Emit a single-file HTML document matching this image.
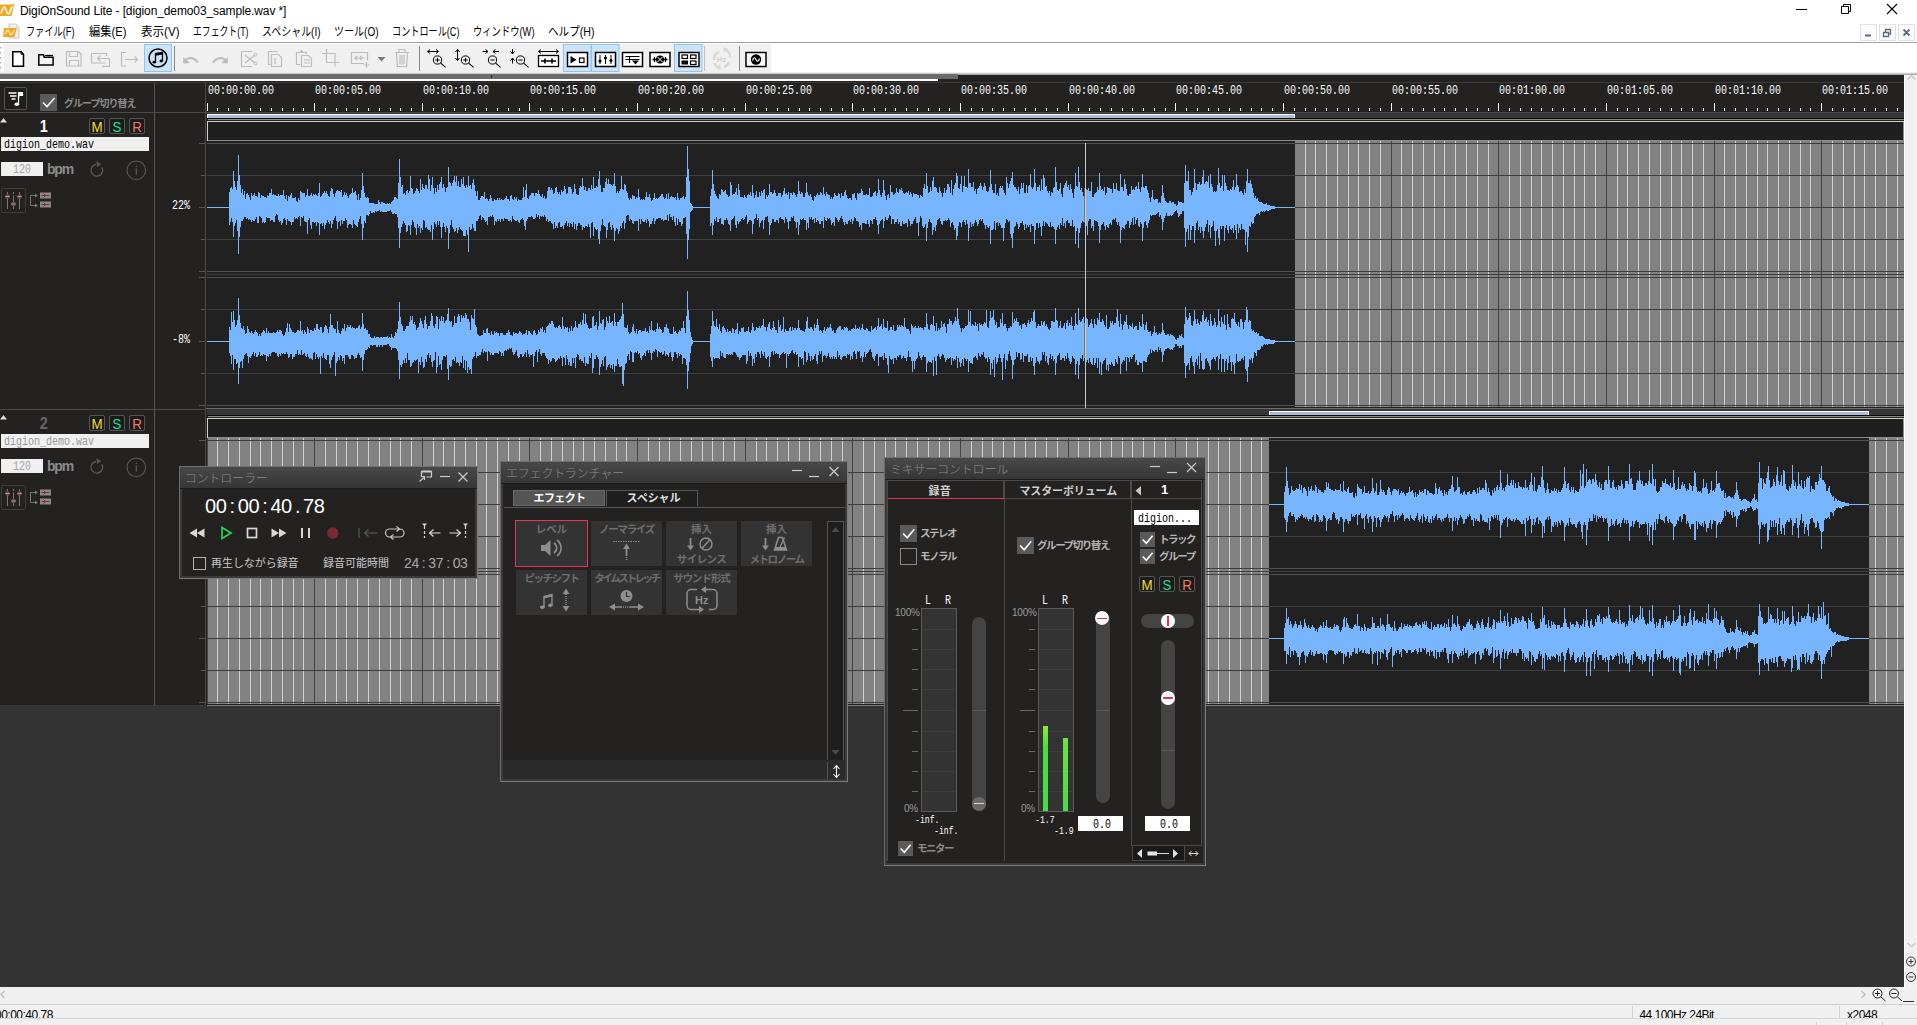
<!DOCTYPE html><html lang="ja"><head><meta charset="utf-8"><title>DigiOnSound Lite</title><style>
html,body{margin:0;padding:0;}
body{width:1917px;height:1025px;overflow:hidden;background:#333;position:relative;font-family:"Liberation Sans","Noto Sans CJK JP",sans-serif;font-size:12px;}
div,span,svg{position:absolute;box-sizing:border-box;}
.t{white-space:nowrap;line-height:1;}
.mono{font-family:"Liberation Mono","IPAGothic",monospace;}
.jp{font-family:"Liberation Sans","Noto Sans CJK JP",sans-serif;}
i{font-style:normal;margin:0 3px;}</style></head><body><div style="left:0px;top:81px;width:1904px;height:625px;background:#232221;"></div><div style="left:0px;top:706px;width:1904px;height:281px;background:#333;"></div><div style="left:0px;top:82px;width:1904px;height:1px;background:#3a3a3a;"></div><div style="left:0px;top:112px;width:1904px;height:1px;background:#4a4a4a;"></div><div style="left:154px;top:83px;width:1px;height:623px;background:#555;"></div><div style="left:205px;top:83px;width:1px;height:623px;background:#4a4a4a;"></div><svg style="left:0px;top:0px;" width="1903" height="112" viewBox="0 0 1903 112"><rect x="207" y="103" width="1" height="8" fill="#fff"/><rect x="217" y="108" width="1" height="3" fill="#f0f0f0"/><rect x="228" y="108" width="1" height="3" fill="#f0f0f0"/><rect x="239" y="108" width="1" height="3" fill="#f0f0f0"/><rect x="250" y="108" width="1" height="3" fill="#f0f0f0"/><rect x="260" y="108" width="1" height="3" fill="#f0f0f0"/><rect x="271" y="108" width="1" height="3" fill="#f0f0f0"/><rect x="282" y="108" width="1" height="3" fill="#f0f0f0"/><rect x="293" y="108" width="1" height="3" fill="#f0f0f0"/><rect x="303" y="108" width="1" height="3" fill="#f0f0f0"/><rect x="314" y="103" width="1" height="8" fill="#fff"/><rect x="325" y="108" width="1" height="3" fill="#f0f0f0"/><rect x="336" y="108" width="1" height="3" fill="#f0f0f0"/><rect x="346" y="108" width="1" height="3" fill="#f0f0f0"/><rect x="357" y="108" width="1" height="3" fill="#f0f0f0"/><rect x="368" y="108" width="1" height="3" fill="#f0f0f0"/><rect x="379" y="108" width="1" height="3" fill="#f0f0f0"/><rect x="390" y="108" width="1" height="3" fill="#f0f0f0"/><rect x="400" y="108" width="1" height="3" fill="#f0f0f0"/><rect x="411" y="108" width="1" height="3" fill="#f0f0f0"/><rect x="422" y="103" width="1" height="8" fill="#fff"/><rect x="433" y="108" width="1" height="3" fill="#f0f0f0"/><rect x="443" y="108" width="1" height="3" fill="#f0f0f0"/><rect x="454" y="108" width="1" height="3" fill="#f0f0f0"/><rect x="465" y="108" width="1" height="3" fill="#f0f0f0"/><rect x="476" y="108" width="1" height="3" fill="#f0f0f0"/><rect x="486" y="108" width="1" height="3" fill="#f0f0f0"/><rect x="497" y="108" width="1" height="3" fill="#f0f0f0"/><rect x="508" y="108" width="1" height="3" fill="#f0f0f0"/><rect x="519" y="108" width="1" height="3" fill="#f0f0f0"/><rect x="529" y="103" width="1" height="8" fill="#fff"/><rect x="540" y="108" width="1" height="3" fill="#f0f0f0"/><rect x="551" y="108" width="1" height="3" fill="#f0f0f0"/><rect x="562" y="108" width="1" height="3" fill="#f0f0f0"/><rect x="573" y="108" width="1" height="3" fill="#f0f0f0"/><rect x="583" y="108" width="1" height="3" fill="#f0f0f0"/><rect x="594" y="108" width="1" height="3" fill="#f0f0f0"/><rect x="605" y="108" width="1" height="3" fill="#f0f0f0"/><rect x="616" y="108" width="1" height="3" fill="#f0f0f0"/><rect x="626" y="108" width="1" height="3" fill="#f0f0f0"/><rect x="637" y="103" width="1" height="8" fill="#fff"/><rect x="648" y="108" width="1" height="3" fill="#f0f0f0"/><rect x="659" y="108" width="1" height="3" fill="#f0f0f0"/><rect x="669" y="108" width="1" height="3" fill="#f0f0f0"/><rect x="680" y="108" width="1" height="3" fill="#f0f0f0"/><rect x="691" y="108" width="1" height="3" fill="#f0f0f0"/><rect x="702" y="108" width="1" height="3" fill="#f0f0f0"/><rect x="712" y="108" width="1" height="3" fill="#f0f0f0"/><rect x="723" y="108" width="1" height="3" fill="#f0f0f0"/><rect x="734" y="108" width="1" height="3" fill="#f0f0f0"/><rect x="745" y="103" width="1" height="8" fill="#fff"/><rect x="756" y="108" width="1" height="3" fill="#f0f0f0"/><rect x="766" y="108" width="1" height="3" fill="#f0f0f0"/><rect x="777" y="108" width="1" height="3" fill="#f0f0f0"/><rect x="788" y="108" width="1" height="3" fill="#f0f0f0"/><rect x="799" y="108" width="1" height="3" fill="#f0f0f0"/><rect x="809" y="108" width="1" height="3" fill="#f0f0f0"/><rect x="820" y="108" width="1" height="3" fill="#f0f0f0"/><rect x="831" y="108" width="1" height="3" fill="#f0f0f0"/><rect x="842" y="108" width="1" height="3" fill="#f0f0f0"/><rect x="852" y="103" width="1" height="8" fill="#fff"/><rect x="863" y="108" width="1" height="3" fill="#f0f0f0"/><rect x="874" y="108" width="1" height="3" fill="#f0f0f0"/><rect x="885" y="108" width="1" height="3" fill="#f0f0f0"/><rect x="895" y="108" width="1" height="3" fill="#f0f0f0"/><rect x="906" y="108" width="1" height="3" fill="#f0f0f0"/><rect x="917" y="108" width="1" height="3" fill="#f0f0f0"/><rect x="928" y="108" width="1" height="3" fill="#f0f0f0"/><rect x="939" y="108" width="1" height="3" fill="#f0f0f0"/><rect x="949" y="108" width="1" height="3" fill="#f0f0f0"/><rect x="960" y="103" width="1" height="8" fill="#fff"/><rect x="971" y="108" width="1" height="3" fill="#f0f0f0"/><rect x="982" y="108" width="1" height="3" fill="#f0f0f0"/><rect x="992" y="108" width="1" height="3" fill="#f0f0f0"/><rect x="1003" y="108" width="1" height="3" fill="#f0f0f0"/><rect x="1014" y="108" width="1" height="3" fill="#f0f0f0"/><rect x="1025" y="108" width="1" height="3" fill="#f0f0f0"/><rect x="1035" y="108" width="1" height="3" fill="#f0f0f0"/><rect x="1046" y="108" width="1" height="3" fill="#f0f0f0"/><rect x="1057" y="108" width="1" height="3" fill="#f0f0f0"/><rect x="1068" y="103" width="1" height="8" fill="#fff"/><rect x="1078" y="108" width="1" height="3" fill="#f0f0f0"/><rect x="1089" y="108" width="1" height="3" fill="#f0f0f0"/><rect x="1100" y="108" width="1" height="3" fill="#f0f0f0"/><rect x="1111" y="108" width="1" height="3" fill="#f0f0f0"/><rect x="1122" y="108" width="1" height="3" fill="#f0f0f0"/><rect x="1132" y="108" width="1" height="3" fill="#f0f0f0"/><rect x="1143" y="108" width="1" height="3" fill="#f0f0f0"/><rect x="1154" y="108" width="1" height="3" fill="#f0f0f0"/><rect x="1165" y="108" width="1" height="3" fill="#f0f0f0"/><rect x="1175" y="103" width="1" height="8" fill="#fff"/><rect x="1186" y="108" width="1" height="3" fill="#f0f0f0"/><rect x="1197" y="108" width="1" height="3" fill="#f0f0f0"/><rect x="1208" y="108" width="1" height="3" fill="#f0f0f0"/><rect x="1218" y="108" width="1" height="3" fill="#f0f0f0"/><rect x="1229" y="108" width="1" height="3" fill="#f0f0f0"/><rect x="1240" y="108" width="1" height="3" fill="#f0f0f0"/><rect x="1251" y="108" width="1" height="3" fill="#f0f0f0"/><rect x="1261" y="108" width="1" height="3" fill="#f0f0f0"/><rect x="1272" y="108" width="1" height="3" fill="#f0f0f0"/><rect x="1283" y="103" width="1" height="8" fill="#fff"/><rect x="1294" y="108" width="1" height="3" fill="#f0f0f0"/><rect x="1305" y="108" width="1" height="3" fill="#f0f0f0"/><rect x="1315" y="108" width="1" height="3" fill="#f0f0f0"/><rect x="1326" y="108" width="1" height="3" fill="#f0f0f0"/><rect x="1337" y="108" width="1" height="3" fill="#f0f0f0"/><rect x="1348" y="108" width="1" height="3" fill="#f0f0f0"/><rect x="1358" y="108" width="1" height="3" fill="#f0f0f0"/><rect x="1369" y="108" width="1" height="3" fill="#f0f0f0"/><rect x="1380" y="108" width="1" height="3" fill="#f0f0f0"/><rect x="1391" y="103" width="1" height="8" fill="#fff"/><rect x="1401" y="108" width="1" height="3" fill="#f0f0f0"/><rect x="1412" y="108" width="1" height="3" fill="#f0f0f0"/><rect x="1423" y="108" width="1" height="3" fill="#f0f0f0"/><rect x="1434" y="108" width="1" height="3" fill="#f0f0f0"/><rect x="1444" y="108" width="1" height="3" fill="#f0f0f0"/><rect x="1455" y="108" width="1" height="3" fill="#f0f0f0"/><rect x="1466" y="108" width="1" height="3" fill="#f0f0f0"/><rect x="1477" y="108" width="1" height="3" fill="#f0f0f0"/><rect x="1488" y="108" width="1" height="3" fill="#f0f0f0"/><rect x="1498" y="103" width="1" height="8" fill="#fff"/><rect x="1509" y="108" width="1" height="3" fill="#f0f0f0"/><rect x="1520" y="108" width="1" height="3" fill="#f0f0f0"/><rect x="1531" y="108" width="1" height="3" fill="#f0f0f0"/><rect x="1541" y="108" width="1" height="3" fill="#f0f0f0"/><rect x="1552" y="108" width="1" height="3" fill="#f0f0f0"/><rect x="1563" y="108" width="1" height="3" fill="#f0f0f0"/><rect x="1574" y="108" width="1" height="3" fill="#f0f0f0"/><rect x="1584" y="108" width="1" height="3" fill="#f0f0f0"/><rect x="1595" y="108" width="1" height="3" fill="#f0f0f0"/><rect x="1606" y="103" width="1" height="8" fill="#fff"/><rect x="1617" y="108" width="1" height="3" fill="#f0f0f0"/><rect x="1627" y="108" width="1" height="3" fill="#f0f0f0"/><rect x="1638" y="108" width="1" height="3" fill="#f0f0f0"/><rect x="1649" y="108" width="1" height="3" fill="#f0f0f0"/><rect x="1660" y="108" width="1" height="3" fill="#f0f0f0"/><rect x="1671" y="108" width="1" height="3" fill="#f0f0f0"/><rect x="1681" y="108" width="1" height="3" fill="#f0f0f0"/><rect x="1692" y="108" width="1" height="3" fill="#f0f0f0"/><rect x="1703" y="108" width="1" height="3" fill="#f0f0f0"/><rect x="1714" y="103" width="1" height="8" fill="#fff"/><rect x="1724" y="108" width="1" height="3" fill="#f0f0f0"/><rect x="1735" y="108" width="1" height="3" fill="#f0f0f0"/><rect x="1746" y="108" width="1" height="3" fill="#f0f0f0"/><rect x="1757" y="108" width="1" height="3" fill="#f0f0f0"/><rect x="1767" y="108" width="1" height="3" fill="#f0f0f0"/><rect x="1778" y="108" width="1" height="3" fill="#f0f0f0"/><rect x="1789" y="108" width="1" height="3" fill="#f0f0f0"/><rect x="1800" y="108" width="1" height="3" fill="#f0f0f0"/><rect x="1810" y="108" width="1" height="3" fill="#f0f0f0"/><rect x="1821" y="103" width="1" height="8" fill="#fff"/><rect x="1832" y="108" width="1" height="3" fill="#f0f0f0"/><rect x="1843" y="108" width="1" height="3" fill="#f0f0f0"/><rect x="1854" y="108" width="1" height="3" fill="#f0f0f0"/><rect x="1864" y="108" width="1" height="3" fill="#f0f0f0"/><rect x="1875" y="108" width="1" height="3" fill="#f0f0f0"/><rect x="1886" y="108" width="1" height="3" fill="#f0f0f0"/><rect x="1897" y="108" width="1" height="3" fill="#f0f0f0"/></svg><span class="t mono" style="left:208px;top:84px;font-size:13.0px;color:#fff;transform:scaleX(0.7690);transform-origin:0 0;">00:00:00.00</span><span class="t mono" style="left:315px;top:84px;font-size:13.0px;color:#fff;transform:scaleX(0.7690);transform-origin:0 0;">00:00:05.00</span><span class="t mono" style="left:423px;top:84px;font-size:13.0px;color:#fff;transform:scaleX(0.7690);transform-origin:0 0;">00:00:10.00</span><span class="t mono" style="left:530px;top:84px;font-size:13.0px;color:#fff;transform:scaleX(0.7690);transform-origin:0 0;">00:00:15.00</span><span class="t mono" style="left:638px;top:84px;font-size:13.0px;color:#fff;transform:scaleX(0.7690);transform-origin:0 0;">00:00:20.00</span><span class="t mono" style="left:746px;top:84px;font-size:13.0px;color:#fff;transform:scaleX(0.7690);transform-origin:0 0;">00:00:25.00</span><span class="t mono" style="left:853px;top:84px;font-size:13.0px;color:#fff;transform:scaleX(0.7690);transform-origin:0 0;">00:00:30.00</span><span class="t mono" style="left:961px;top:84px;font-size:13.0px;color:#fff;transform:scaleX(0.7690);transform-origin:0 0;">00:00:35.00</span><span class="t mono" style="left:1069px;top:84px;font-size:13.0px;color:#fff;transform:scaleX(0.7690);transform-origin:0 0;">00:00:40.00</span><span class="t mono" style="left:1176px;top:84px;font-size:13.0px;color:#fff;transform:scaleX(0.7690);transform-origin:0 0;">00:00:45.00</span><span class="t mono" style="left:1284px;top:84px;font-size:13.0px;color:#fff;transform:scaleX(0.7690);transform-origin:0 0;">00:00:50.00</span><span class="t mono" style="left:1392px;top:84px;font-size:13.0px;color:#fff;transform:scaleX(0.7690);transform-origin:0 0;">00:00:55.00</span><span class="t mono" style="left:1499px;top:84px;font-size:13.0px;color:#fff;transform:scaleX(0.7690);transform-origin:0 0;">00:01:00.00</span><span class="t mono" style="left:1607px;top:84px;font-size:13.0px;color:#fff;transform:scaleX(0.7690);transform-origin:0 0;">00:01:05.00</span><span class="t mono" style="left:1715px;top:84px;font-size:13.0px;color:#fff;transform:scaleX(0.7690);transform-origin:0 0;">00:01:10.00</span><span class="t mono" style="left:1822px;top:84px;font-size:13.0px;color:#fff;transform:scaleX(0.7690);transform-origin:0 0;">00:01:15.00</span><div style="left:4px;top:87px;width:23px;height:23px;background:#1f1e1d;border:1px solid #555;border-radius:2px;"></div><svg style="left:4px;top:87px;" width="23" height="23" viewBox="0 0 23 23"><path d="M4.500 6h8M6 9h6.500M7.500 12h4" stroke="#fff" stroke-width="1.300"/><path d="M14.500 17v-11.500h4v3h-3" fill="#fff" stroke="#fff" stroke-width="1.200"/><ellipse cx="12.800" cy="17.300" rx="2.300" ry="1.800" fill="#fff"/></svg><div style="left:40px;top:94px;width:17px;height:17px;background:#5a5a5a;"></div><svg style="left:40px;top:94px;" width="17" height="17" viewBox="0 0 17 17"><path d="M3 8.500l4 4 7.500-8.500" fill="none" stroke="#fff" stroke-width="1.600"/></svg><span class="t jp" style="left:64px;top:98.5px;font-size:10px;color:#8a8a8a;font-weight:bold;letter-spacing:-0.99px;">グループ切り替え</span><svg style="left:0px;top:0px;" width="1904" height="710" viewBox="0 0 1904 710"><rect x="207" y="113" width="1697" height="5" fill="#363636"/><rect x="207" y="114" width="1088" height="4" fill="#a9bcd8"/><rect x="207" y="114" width="1088" height="1" fill="#fff"/><rect x="207" y="114" width="1" height="4" fill="#fff"/><rect x="1294" y="114" width="1" height="4" fill="#fff"/><rect x="207" y="118" width="1697" height="1" fill="#0a0a0a"/><rect x="208" y="119" width="1696" height="1" fill="#8a8a8a"/><rect x="207" y="121" width="1697" height="20" fill="#1f1f1f"/><rect x="207" y="140" width="1697" height="1" fill="#8c8c8c"/><rect x="1903" y="121" width="1" height="20" fill="#8c8c8c"/><rect x="207" y="121" width="1697" height="1" fill="#d6d2b6"/><rect x="207" y="121" width="1" height="20" fill="#d6d2b6"/><rect x="207" y="141" width="1697" height="266" fill="#212121"/><rect x="1295" y="141" width="609" height="266" fill="#828282"/><rect x="1305" y="141" width="1" height="266" fill="#d0d0d0"/><rect x="1315" y="141" width="1" height="266" fill="#d0d0d0"/><rect x="1326" y="141" width="1" height="266" fill="#d0d0d0"/><rect x="1337" y="141" width="1" height="266" fill="#d0d0d0"/><rect x="1348" y="141" width="1" height="266" fill="#d0d0d0"/><rect x="1358" y="141" width="1" height="266" fill="#d0d0d0"/><rect x="1369" y="141" width="1" height="266" fill="#d0d0d0"/><rect x="1380" y="141" width="1" height="266" fill="#d0d0d0"/><rect x="1391" y="141" width="1" height="266" fill="#444"/><rect x="1401" y="141" width="1" height="266" fill="#d0d0d0"/><rect x="1412" y="141" width="1" height="266" fill="#d0d0d0"/><rect x="1423" y="141" width="1" height="266" fill="#d0d0d0"/><rect x="1434" y="141" width="1" height="266" fill="#d0d0d0"/><rect x="1444" y="141" width="1" height="266" fill="#d0d0d0"/><rect x="1455" y="141" width="1" height="266" fill="#d0d0d0"/><rect x="1466" y="141" width="1" height="266" fill="#d0d0d0"/><rect x="1477" y="141" width="1" height="266" fill="#d0d0d0"/><rect x="1488" y="141" width="1" height="266" fill="#d0d0d0"/><rect x="1498" y="141" width="1" height="266" fill="#444"/><rect x="1509" y="141" width="1" height="266" fill="#d0d0d0"/><rect x="1520" y="141" width="1" height="266" fill="#d0d0d0"/><rect x="1531" y="141" width="1" height="266" fill="#d0d0d0"/><rect x="1541" y="141" width="1" height="266" fill="#d0d0d0"/><rect x="1552" y="141" width="1" height="266" fill="#d0d0d0"/><rect x="1563" y="141" width="1" height="266" fill="#d0d0d0"/><rect x="1574" y="141" width="1" height="266" fill="#d0d0d0"/><rect x="1584" y="141" width="1" height="266" fill="#d0d0d0"/><rect x="1595" y="141" width="1" height="266" fill="#d0d0d0"/><rect x="1606" y="141" width="1" height="266" fill="#444"/><rect x="1617" y="141" width="1" height="266" fill="#d0d0d0"/><rect x="1627" y="141" width="1" height="266" fill="#d0d0d0"/><rect x="1638" y="141" width="1" height="266" fill="#d0d0d0"/><rect x="1649" y="141" width="1" height="266" fill="#d0d0d0"/><rect x="1660" y="141" width="1" height="266" fill="#d0d0d0"/><rect x="1671" y="141" width="1" height="266" fill="#d0d0d0"/><rect x="1681" y="141" width="1" height="266" fill="#d0d0d0"/><rect x="1692" y="141" width="1" height="266" fill="#d0d0d0"/><rect x="1703" y="141" width="1" height="266" fill="#d0d0d0"/><rect x="1714" y="141" width="1" height="266" fill="#444"/><rect x="1724" y="141" width="1" height="266" fill="#d0d0d0"/><rect x="1735" y="141" width="1" height="266" fill="#d0d0d0"/><rect x="1746" y="141" width="1" height="266" fill="#d0d0d0"/><rect x="1757" y="141" width="1" height="266" fill="#d0d0d0"/><rect x="1767" y="141" width="1" height="266" fill="#d0d0d0"/><rect x="1778" y="141" width="1" height="266" fill="#d0d0d0"/><rect x="1789" y="141" width="1" height="266" fill="#d0d0d0"/><rect x="1800" y="141" width="1" height="266" fill="#d0d0d0"/><rect x="1810" y="141" width="1" height="266" fill="#d0d0d0"/><rect x="1821" y="141" width="1" height="266" fill="#444"/><rect x="1832" y="141" width="1" height="266" fill="#d0d0d0"/><rect x="1843" y="141" width="1" height="266" fill="#d0d0d0"/><rect x="1854" y="141" width="1" height="266" fill="#d0d0d0"/><rect x="1864" y="141" width="1" height="266" fill="#d0d0d0"/><rect x="1875" y="141" width="1" height="266" fill="#d0d0d0"/><rect x="1886" y="141" width="1" height="266" fill="#d0d0d0"/><rect x="1897" y="141" width="1" height="266" fill="#d0d0d0"/><rect x="207" y="143" width="1697" height="1" fill="#555" opacity="0.9"/><rect x="1295" y="143" width="609" height="1" fill="#3c3c3c"/><rect x="207" y="175" width="1697" height="1" fill="#444" opacity="0.9"/><rect x="1295" y="175" width="609" height="1" fill="#3c3c3c"/><rect x="207" y="207" width="1697" height="1" fill="#444" opacity="0.9"/><rect x="1295" y="207" width="609" height="1" fill="#3c3c3c"/><rect x="207" y="239" width="1697" height="1" fill="#444" opacity="0.9"/><rect x="1295" y="239" width="609" height="1" fill="#3c3c3c"/><rect x="207" y="271" width="1697" height="1" fill="#555" opacity="0.9"/><rect x="1295" y="271" width="609" height="1" fill="#3c3c3c"/><rect x="207" y="274" width="1697" height="1" fill="#444" opacity="0.9"/><rect x="1295" y="274" width="609" height="1" fill="#3c3c3c"/><rect x="207" y="277" width="1697" height="1" fill="#555" opacity="0.9"/><rect x="1295" y="277" width="609" height="1" fill="#3c3c3c"/><rect x="207" y="309" width="1697" height="1" fill="#444" opacity="0.9"/><rect x="1295" y="309" width="609" height="1" fill="#3c3c3c"/><rect x="207" y="341" width="1697" height="1" fill="#444" opacity="0.9"/><rect x="1295" y="341" width="609" height="1" fill="#3c3c3c"/><rect x="207" y="373" width="1697" height="1" fill="#444" opacity="0.9"/><rect x="1295" y="373" width="609" height="1" fill="#3c3c3c"/><rect x="207" y="405" width="1697" height="1" fill="#555" opacity="0.9"/><rect x="1295" y="405" width="609" height="1" fill="#3c3c3c"/><rect x="199" y="143" width="6" height="1" fill="#555"/><rect x="201" y="175" width="4" height="1" fill="#555"/><rect x="199" y="207" width="6" height="1" fill="#555"/><rect x="201" y="239" width="4" height="1" fill="#555"/><rect x="199" y="271" width="6" height="1" fill="#555"/><rect x="199" y="277" width="6" height="1" fill="#555"/><rect x="201" y="309" width="4" height="1" fill="#555"/><rect x="199" y="341" width="6" height="1" fill="#555"/><rect x="201" y="373" width="4" height="1" fill="#555"/><rect x="199" y="405" width="6" height="1" fill="#555"/><rect x="207" y="207" width="1088" height="1" fill="#77b5fe"/><path d="M229.5 192V225M230.5 188V222M231.5 187V218M232.5 189V222M233.5 171V237M234.5 181V226M235.5 187V223M236.5 190V220M237.5 181V231M238.5 155V254M239.5 175V237M240.5 185V227M241.5 193V221M242.5 189V221M243.5 195V219M244.5 191V217M245.5 199V217M246.5 194V219M247.5 193V218M248.5 195V220M249.5 197V219M250.5 200V220M251.5 193V222M252.5 196V220M253.5 195V221M254.5 193V221M255.5 196V219M256.5 196V217M257.5 197V223M258.5 192V223M259.5 193V216M260.5 198V217M261.5 195V218M262.5 196V223M263.5 196V222M264.5 197V223M265.5 197V222M266.5 198V217M267.5 195V218M268.5 196V218M269.5 193V218M270.5 193V221M271.5 189V220M272.5 195V220M273.5 194V222M274.5 195V222M275.5 195V216M276.5 196V214M277.5 196V215M278.5 194V220M279.5 196V222M280.5 195V221M281.5 195V225M282.5 195V223M283.5 190V219M284.5 196V218M285.5 199V220M286.5 195V225M287.5 201V219M288.5 196V221M289.5 197V221M290.5 195V222M291.5 193V225M292.5 198V222M293.5 198V222M294.5 198V217M295.5 197V219M296.5 201V218M297.5 202V219M298.5 198V217M299.5 200V216M300.5 191V226M301.5 192V217M302.5 193V218M303.5 193V216M304.5 193V221M305.5 197V222M306.5 195V222M307.5 189V234M308.5 196V220M309.5 196V218M310.5 195V225M311.5 193V229M312.5 196V222M313.5 194V222M314.5 195V223M315.5 194V222M316.5 195V226M317.5 196V222M318.5 193V223M319.5 183V235M320.5 197V224M321.5 196V223M322.5 194V226M323.5 193V223M324.5 191V229M325.5 193V225M326.5 191V223M327.5 194V220M328.5 196V222M329.5 197V224M330.5 191V221M331.5 188V228M332.5 189V224M333.5 194V220M334.5 197V218M335.5 193V216M336.5 191V221M337.5 190V229M338.5 191V222M339.5 191V221M340.5 192V226M341.5 190V220M342.5 197V224M343.5 195V221M344.5 192V221M345.5 195V218M346.5 193V220M347.5 196V228M348.5 198V225M349.5 195V224M350.5 194V224M351.5 193V225M352.5 188V228M353.5 193V220M354.5 192V224M355.5 191V225M356.5 195V226M357.5 200V227M358.5 194V222M359.5 200V219M360.5 198V216M361.5 190V224M362.5 173V240M363.5 186V228M364.5 193V221M365.5 197V223M366.5 198V215M367.5 197V215M368.5 198V216M369.5 203V214M370.5 203V211M371.5 203V213M372.5 203V213M373.5 203V212M374.5 204V213M375.5 204V211M376.5 204V212M377.5 204V211M378.5 200V211M379.5 202V210M380.5 204V212M381.5 202V211M382.5 202V212M383.5 203V212M384.5 203V212M385.5 204V212M386.5 204V212M387.5 203V211M388.5 204V211M389.5 203V211M390.5 204V210M391.5 202V212M392.5 201V214M393.5 200V214M394.5 197V213M395.5 197V214M396.5 198V214M397.5 199V217M398.5 183V228M399.5 159V248M400.5 177V233M401.5 187V227M402.5 185V224M403.5 194V221M404.5 193V223M405.5 195V225M406.5 191V232M407.5 190V231M408.5 193V225M409.5 191V226M410.5 176V235M411.5 188V225M412.5 189V220M413.5 194V222M414.5 193V227M415.5 191V228M416.5 188V235M417.5 189V224M418.5 191V228M419.5 193V226M420.5 179V233M421.5 190V228M422.5 184V230M423.5 188V220M424.5 189V221M425.5 185V228M426.5 185V227M427.5 189V229M428.5 175V230M429.5 179V230M430.5 191V232M431.5 185V225M432.5 177V240M433.5 188V229M434.5 194V222M435.5 188V224M436.5 192V227M437.5 185V221M438.5 190V225M439.5 184V221M440.5 182V227M441.5 177V238M442.5 188V227M443.5 184V223M444.5 187V227M445.5 192V232M446.5 188V226M447.5 187V228M448.5 167V249M449.5 182V233M450.5 183V225M451.5 186V220M452.5 183V227M453.5 180V229M454.5 176V232M455.5 182V231M456.5 176V228M457.5 186V233M458.5 181V230M459.5 187V227M460.5 187V229M461.5 179V230M462.5 184V231M463.5 177V236M464.5 186V236M465.5 188V236M466.5 185V230M467.5 187V235M468.5 176V252M469.5 186V227M470.5 185V230M471.5 189V229M472.5 183V224M473.5 179V228M474.5 185V231M475.5 191V231M476.5 196V221M477.5 191V221M478.5 200V219M479.5 200V216M480.5 198V215M481.5 196V220M482.5 196V217M483.5 197V218M484.5 192V220M485.5 199V222M486.5 198V221M487.5 199V225M488.5 201V217M489.5 199V217M490.5 195V216M491.5 198V217M492.5 201V215M493.5 201V217M494.5 199V225M495.5 200V221M496.5 200V222M497.5 198V219M498.5 200V221M499.5 198V219M500.5 200V222M501.5 199V219M502.5 200V219M503.5 200V221M504.5 199V218M505.5 198V219M506.5 196V219M507.5 199V219M508.5 199V221M509.5 201V221M510.5 196V220M511.5 195V222M512.5 199V216M513.5 200V219M514.5 197V220M515.5 199V221M516.5 197V221M517.5 201V220M518.5 199V222M519.5 200V223M520.5 200V220M521.5 200V219M522.5 198V218M523.5 187V220M524.5 197V226M525.5 190V230M526.5 184V221M527.5 198V219M528.5 199V217M529.5 196V217M530.5 195V217M531.5 193V216M532.5 193V217M533.5 193V219M534.5 196V219M535.5 193V218M536.5 193V214M537.5 194V217M538.5 190V215M539.5 194V219M540.5 196V216M541.5 197V217M542.5 194V216M543.5 198V217M544.5 196V215M545.5 199V217M546.5 198V221M547.5 191V219M548.5 187V222M549.5 187V221M550.5 190V221M551.5 188V223M552.5 190V224M553.5 194V229M554.5 193V222M555.5 188V228M556.5 187V226M557.5 192V228M558.5 194V223M559.5 192V222M560.5 195V227M561.5 190V227M562.5 192V226M563.5 191V229M564.5 186V225M565.5 189V223M566.5 194V221M567.5 193V226M568.5 187V223M569.5 187V227M570.5 187V223M571.5 189V224M572.5 194V227M573.5 192V222M574.5 184V229M575.5 189V224M576.5 194V230M577.5 195V226M578.5 195V223M579.5 188V223M580.5 186V225M581.5 187V225M582.5 178V230M583.5 186V227M584.5 190V228M585.5 187V226M586.5 191V226M587.5 191V227M588.5 188V224M589.5 188V227M590.5 190V238M591.5 185V223M592.5 189V222M593.5 177V236M594.5 188V227M595.5 188V229M596.5 186V230M597.5 187V229M598.5 179V239M599.5 171V244M600.5 185V231M601.5 192V225M602.5 192V219M603.5 188V225M604.5 188V226M605.5 182V227M606.5 178V238M607.5 184V230M608.5 179V223M609.5 184V222M610.5 184V227M611.5 185V230M612.5 186V225M613.5 184V228M614.5 173V241M615.5 186V231M616.5 193V228M617.5 191V229M618.5 193V234M619.5 191V231M620.5 189V226M621.5 176V228M622.5 189V223M623.5 190V221M624.5 184V229M625.5 185V223M626.5 191V216M627.5 193V215M628.5 198V215M629.5 200V221M630.5 198V219M631.5 199V220M632.5 195V223M633.5 196V224M634.5 196V221M635.5 199V221M636.5 197V221M637.5 198V221M638.5 189V231M639.5 197V219M640.5 200V224M641.5 199V219M642.5 200V221M643.5 199V222M644.5 200V222M645.5 197V220M646.5 192V223M647.5 197V219M648.5 197V221M649.5 194V227M650.5 198V224M651.5 201V224M652.5 200V221M653.5 198V218M654.5 193V224M655.5 199V221M656.5 198V219M657.5 199V219M658.5 198V218M659.5 197V218M660.5 196V218M661.5 194V220M662.5 194V219M663.5 197V221M664.5 199V220M665.5 198V220M666.5 194V220M667.5 199V215M668.5 193V221M669.5 199V214M670.5 197V217M671.5 196V217M672.5 197V220M673.5 197V216M674.5 198V222M675.5 197V226M676.5 200V218M677.5 193V225M678.5 198V219M679.5 200V222M680.5 198V222M681.5 198V226M682.5 197V224M683.5 196V218M684.5 199V218M685.5 197V217M686.5 177V234M687.5 146V259M688.5 169V240M689.5 181V229M690.5 203V212M691.5 204V211M692.5 206V210M710.5 196V226M711.5 189V223M712.5 170V235M713.5 184V225M714.5 191V219M715.5 194V221M716.5 196V217M717.5 198V222M718.5 199V222M719.5 194V219M720.5 195V218M721.5 189V224M722.5 190V224M723.5 192V225M724.5 191V220M725.5 190V220M726.5 194V218M727.5 195V220M728.5 197V224M729.5 196V225M730.5 182V231M731.5 185V220M732.5 195V219M733.5 194V218M734.5 194V216M735.5 192V225M736.5 188V228M737.5 195V221M738.5 184V224M739.5 190V222M740.5 197V221M741.5 197V219M742.5 197V218M743.5 198V220M744.5 195V219M745.5 197V217M746.5 198V215M747.5 195V224M748.5 194V222M749.5 195V220M750.5 192V220M751.5 196V221M752.5 185V234M753.5 193V224M754.5 198V219M755.5 195V218M756.5 191V214M757.5 197V220M758.5 197V218M759.5 192V227M760.5 196V223M761.5 191V221M762.5 193V220M763.5 190V229M764.5 189V220M765.5 199V217M766.5 195V217M767.5 197V216M768.5 195V222M769.5 184V235M770.5 192V225M771.5 192V223M772.5 194V219M773.5 193V219M774.5 190V222M775.5 193V222M776.5 196V220M777.5 196V220M778.5 193V223M779.5 193V218M780.5 193V217M781.5 197V219M782.5 195V219M783.5 191V220M784.5 188V223M785.5 194V217M786.5 193V219M787.5 195V222M788.5 192V229M789.5 199V221M790.5 193V221M791.5 193V217M792.5 195V218M793.5 192V216M794.5 193V221M795.5 195V222M796.5 197V228M797.5 194V222M798.5 181V235M799.5 191V225M800.5 194V219M801.5 192V220M802.5 193V219M803.5 197V218M804.5 197V220M805.5 193V220M806.5 183V230M807.5 192V223M808.5 195V228M809.5 196V217M810.5 194V219M811.5 197V217M812.5 200V220M813.5 201V219M814.5 196V223M815.5 197V218M816.5 195V222M817.5 193V220M818.5 195V221M819.5 195V224M820.5 192V224M821.5 193V221M822.5 195V221M823.5 187V228M824.5 194V217M825.5 196V220M826.5 192V221M827.5 194V218M828.5 195V219M829.5 195V218M830.5 199V220M831.5 197V225M832.5 199V223M833.5 197V222M834.5 193V226M835.5 195V217M836.5 196V218M837.5 196V220M838.5 193V222M839.5 194V220M840.5 198V218M841.5 193V216M842.5 196V219M843.5 196V222M844.5 192V225M845.5 190V222M846.5 195V224M847.5 198V224M848.5 199V221M849.5 198V220M850.5 198V222M851.5 200V219M852.5 194V224M853.5 194V221M854.5 193V217M855.5 198V218M856.5 200V221M857.5 193V221M858.5 194V222M859.5 193V227M860.5 193V225M861.5 189V230M862.5 191V223M863.5 195V223M864.5 195V223M865.5 195V224M866.5 194V224M867.5 195V220M868.5 195V224M869.5 188V227M870.5 197V220M871.5 197V221M872.5 196V224M873.5 193V219M874.5 192V219M875.5 191V217M876.5 196V220M877.5 193V225M878.5 179V234M879.5 190V224M880.5 195V221M881.5 197V220M882.5 193V219M883.5 180V228M884.5 190V221M885.5 196V217M886.5 200V220M887.5 195V220M888.5 194V218M889.5 198V215M890.5 185V216M891.5 192V224M892.5 192V219M893.5 195V219M894.5 194V224M895.5 193V222M896.5 188V222M897.5 192V219M898.5 193V224M899.5 189V222M900.5 190V226M901.5 188V226M902.5 191V221M903.5 193V224M904.5 194V224M905.5 193V223M906.5 192V223M907.5 193V227M908.5 191V219M909.5 195V221M910.5 192V226M911.5 194V224M912.5 197V224M913.5 193V221M914.5 194V219M915.5 194V217M916.5 194V223M917.5 195V223M918.5 195V236M919.5 198V222M920.5 195V216M921.5 196V218M922.5 197V226M923.5 188V228M924.5 184V227M925.5 189V224M926.5 173V241M927.5 186V228M928.5 193V222M929.5 192V219M930.5 187V222M931.5 191V223M932.5 181V235M933.5 177V230M934.5 187V227M935.5 187V231M936.5 188V225M937.5 192V220M938.5 193V219M939.5 187V218M940.5 191V221M941.5 193V224M942.5 197V225M943.5 193V221M944.5 188V221M945.5 193V220M946.5 190V221M947.5 184V220M948.5 184V218M949.5 187V220M950.5 193V227M951.5 180V223M952.5 195V222M953.5 189V225M954.5 185V230M955.5 183V228M956.5 173V240M957.5 176V236M958.5 188V226M959.5 189V222M960.5 184V223M961.5 176V227M962.5 192V222M963.5 186V220M964.5 176V222M965.5 187V225M966.5 187V220M967.5 188V224M968.5 169V241M969.5 183V228M970.5 183V222M971.5 187V227M972.5 187V224M973.5 182V226M974.5 191V223M975.5 189V220M976.5 194V222M977.5 189V226M978.5 188V224M979.5 186V220M980.5 183V219M981.5 186V221M982.5 190V219M983.5 187V223M984.5 183V225M985.5 186V229M986.5 191V225M987.5 192V227M988.5 191V228M989.5 187V226M990.5 170V244M991.5 184V230M992.5 190V230M993.5 193V229M994.5 193V221M995.5 184V230M996.5 195V223M997.5 193V222M998.5 196V226M999.5 188V223M1000.5 186V225M1001.5 188V228M1002.5 186V228M1003.5 190V241M1004.5 193V228M1005.5 195V223M1006.5 177V219M1007.5 183V220M1008.5 188V222M1009.5 184V221M1010.5 181V234M1011.5 178V238M1012.5 172V248M1013.5 185V233M1014.5 187V227M1015.5 187V226M1016.5 189V222M1017.5 191V224M1018.5 187V229M1019.5 194V227M1020.5 189V223M1021.5 183V223M1022.5 188V221M1023.5 183V225M1024.5 193V230M1025.5 193V224M1026.5 185V228M1027.5 193V225M1028.5 186V227M1029.5 185V225M1030.5 174V232M1031.5 187V224M1032.5 189V226M1033.5 187V226M1034.5 169V244M1035.5 183V230M1036.5 191V223M1037.5 187V223M1038.5 187V228M1039.5 185V223M1040.5 191V227M1041.5 179V236M1042.5 190V226M1043.5 175V221M1044.5 178V226M1045.5 187V222M1046.5 186V223M1047.5 191V224M1048.5 193V226M1049.5 191V227M1050.5 196V222M1051.5 192V227M1052.5 193V226M1053.5 188V227M1054.5 187V229M1055.5 167V244M1056.5 182V230M1057.5 190V227M1058.5 191V225M1059.5 189V229M1060.5 183V223M1061.5 194V225M1062.5 197V218M1063.5 188V226M1064.5 185V223M1065.5 183V228M1066.5 181V221M1067.5 187V220M1068.5 185V223M1069.5 190V223M1070.5 184V226M1071.5 189V226M1072.5 193V220M1073.5 198V227M1074.5 189V226M1075.5 173V244M1076.5 186V231M1077.5 187V228M1078.5 167V248M1079.5 182V233M1080.5 190V228M1081.5 188V223M1082.5 192V221M1083.5 196V222M1084.5 197V222M1085.5 188V223M1086.5 189V226M1087.5 190V235M1088.5 188V221M1089.5 191V219M1090.5 191V219M1091.5 182V228M1092.5 197V226M1093.5 197V231M1094.5 194V220M1095.5 193V221M1096.5 192V221M1097.5 187V222M1098.5 190V226M1099.5 173V243M1100.5 186V230M1101.5 190V225M1102.5 189V224M1103.5 191V222M1104.5 187V226M1105.5 195V230M1106.5 193V225M1107.5 187V227M1108.5 188V228M1109.5 188V224M1110.5 189V223M1111.5 189V225M1112.5 193V220M1113.5 183V219M1114.5 189V220M1115.5 189V218M1116.5 183V222M1117.5 190V225M1118.5 191V222M1119.5 191V226M1120.5 174V243M1121.5 187V230M1122.5 187V227M1123.5 191V228M1124.5 179V229M1125.5 184V225M1126.5 189V224M1127.5 195V221M1128.5 196V221M1129.5 194V228M1130.5 194V225M1131.5 186V222M1132.5 190V218M1133.5 189V225M1134.5 190V217M1135.5 187V224M1136.5 186V220M1137.5 189V218M1138.5 182V226M1139.5 189V227M1140.5 192V222M1141.5 187V224M1142.5 174V241M1143.5 187V228M1144.5 188V222M1145.5 186V221M1146.5 186V225M1147.5 190V228M1148.5 193V223M1149.5 198V220M1150.5 202V215M1151.5 197V216M1152.5 190V215M1153.5 199V215M1154.5 200V215M1155.5 199V215M1156.5 199V214M1157.5 199V213M1158.5 203V212M1159.5 202V217M1160.5 203V215M1161.5 196V219M1162.5 185V230M1163.5 193V222M1164.5 198V218M1165.5 201V216M1166.5 202V213M1167.5 203V216M1168.5 203V216M1169.5 201V216M1170.5 201V215M1171.5 203V216M1172.5 202V215M1173.5 202V214M1174.5 204V212M1175.5 204V211M1176.5 206V210M1177.5 205V213M1178.5 201V217M1179.5 202V216M1180.5 202V214M1181.5 202V214M1182.5 203V211M1183.5 203V211M1184.5 183V228M1185.5 165V247M1186.5 181V232M1187.5 181V229M1188.5 171V240M1189.5 190V225M1190.5 190V240M1191.5 195V230M1192.5 192V226M1193.5 188V226M1194.5 169V243M1195.5 183V230M1196.5 190V223M1197.5 184V221M1198.5 184V230M1199.5 182V227M1200.5 185V233M1201.5 184V227M1202.5 177V231M1203.5 170V238M1204.5 184V231M1205.5 182V227M1206.5 181V224M1207.5 182V220M1208.5 176V232M1209.5 188V225M1210.5 174V238M1211.5 184V227M1212.5 187V226M1213.5 192V221M1214.5 191V231M1215.5 192V246M1216.5 191V231M1217.5 185V229M1218.5 168V238M1219.5 183V245M1220.5 188V226M1221.5 186V229M1222.5 175V226M1223.5 191V226M1224.5 175V241M1225.5 183V228M1226.5 186V225M1227.5 190V230M1228.5 190V233M1229.5 191V226M1230.5 189V229M1231.5 190V230M1232.5 187V228M1233.5 180V233M1234.5 190V225M1235.5 187V230M1236.5 174V239M1237.5 185V224M1238.5 187V233M1239.5 192V228M1240.5 191V230M1241.5 191V224M1242.5 193V229M1243.5 195V229M1244.5 189V230M1245.5 193V245M1246.5 181V232M1247.5 169V252M1248.5 183V237M1249.5 183V226M1250.5 180V227M1251.5 184V222M1252.5 188V224M1253.5 193V223M1254.5 198V217M1255.5 196V216M1256.5 199V214M1257.5 198V214M1258.5 201V213M1259.5 202V215M1260.5 202V212M1261.5 202V211M1262.5 203V212M1263.5 204V211M1264.5 204V212M1265.5 204V211M1266.5 203V210M1267.5 205V211M1268.5 205V211M1269.5 205V210M1270.5 206V210M1271.5 206V209M1272.5 206V209M1273.5 206V209M1274.5 206V209" stroke="#77b5fe" stroke-width="1" shape-rendering="crispEdges" fill="none"/><rect x="207" y="341" width="1088" height="1" fill="#77b5fe"/><path d="M229.5 327V353M230.5 330V356M231.5 312V364M232.5 322V355M233.5 311V370M234.5 320V359M235.5 327V359M236.5 325V364M237.5 320V363M238.5 298V384M239.5 315V368M240.5 323V362M241.5 328V361M242.5 329V368M243.5 326V359M244.5 330V355M245.5 334V354M246.5 333V353M247.5 326V356M248.5 329V363M249.5 332V357M250.5 333V358M251.5 331V356M252.5 333V354M253.5 334V352M254.5 332V356M255.5 330V353M256.5 332V357M257.5 333V357M258.5 336V355M259.5 334V352M260.5 336V356M261.5 333V355M262.5 332V356M263.5 330V354M264.5 331V355M265.5 333V355M266.5 328V361M267.5 333V356M268.5 331V357M269.5 333V354M270.5 333V356M271.5 333V353M272.5 333V352M273.5 332V352M274.5 333V352M275.5 333V353M276.5 332V353M277.5 330V356M278.5 332V357M279.5 330V354M280.5 330V356M281.5 331V353M282.5 334V354M283.5 336V353M284.5 335V354M285.5 332V354M286.5 328V352M287.5 323V354M288.5 332V358M289.5 324V357M290.5 328V354M291.5 330V354M292.5 332V359M293.5 332V357M294.5 333V357M295.5 333V354M296.5 332V354M297.5 330V350M298.5 330V355M299.5 331V354M300.5 321V355M301.5 331V350M302.5 330V355M303.5 334V354M304.5 330V353M305.5 332V356M306.5 334V357M307.5 327V354M308.5 329V357M309.5 333V359M310.5 330V358M311.5 330V359M312.5 331V360M313.5 331V353M314.5 328V352M315.5 330V359M316.5 324V354M317.5 324V357M318.5 329V359M319.5 330V357M320.5 327V374M321.5 327V356M322.5 333V358M323.5 332V353M324.5 327V358M325.5 325V359M326.5 326V360M327.5 329V355M328.5 333V355M329.5 327V364M330.5 314V368M331.5 325V360M332.5 325V357M333.5 328V355M334.5 329V352M335.5 329V376M336.5 333V363M337.5 321V361M338.5 330V357M339.5 333V360M340.5 334V355M341.5 331V356M342.5 328V361M343.5 329V358M344.5 324V364M345.5 331V355M346.5 328V355M347.5 325V355M348.5 327V357M349.5 327V359M350.5 325V359M351.5 328V355M352.5 327V355M353.5 328V356M354.5 328V359M355.5 329V358M356.5 328V358M357.5 328V355M358.5 326V353M359.5 325V355M360.5 329V358M361.5 327V357M362.5 313V371M363.5 324V360M364.5 329V354M365.5 328V350M366.5 330V350M367.5 330V349M368.5 334V347M369.5 334V348M370.5 337V345M371.5 338V345M372.5 338V346M373.5 338V345M374.5 336V345M375.5 338V345M376.5 337V347M377.5 337V347M378.5 337V345M379.5 338V347M380.5 337V345M381.5 337V345M382.5 338V347M383.5 337V345M384.5 337V345M385.5 337V345M386.5 337V345M387.5 336V344M388.5 338V344M389.5 337V346M390.5 338V347M391.5 334V350M392.5 337V348M393.5 338V348M394.5 336V348M395.5 332V348M396.5 333V349M397.5 329V351M398.5 321V360M399.5 302V379M400.5 317V365M401.5 324V367M402.5 326V364M403.5 331V360M404.5 331V363M405.5 329V358M406.5 326V363M407.5 326V353M408.5 326V360M409.5 322V360M410.5 316V367M411.5 320V366M412.5 316V363M413.5 324V362M414.5 322V360M415.5 325V361M416.5 330V360M417.5 328V359M418.5 327V373M419.5 323V362M420.5 318V365M421.5 321V357M422.5 324V362M423.5 328V368M424.5 320V367M425.5 316V359M426.5 324V362M427.5 329V355M428.5 326V353M429.5 326V358M430.5 321V355M431.5 313V362M432.5 316V367M433.5 326V361M434.5 328V360M435.5 324V352M436.5 316V373M437.5 317V367M438.5 329V356M439.5 319V365M440.5 321V364M441.5 316V370M442.5 321V360M443.5 317V356M444.5 323V356M445.5 321V357M446.5 320V355M447.5 314V369M448.5 308V380M449.5 321V365M450.5 322V367M451.5 321V366M452.5 327V360M453.5 325V359M454.5 316V361M455.5 323V357M456.5 323V363M457.5 317V362M458.5 314V363M459.5 316V366M460.5 322V362M461.5 315V363M462.5 318V356M463.5 316V368M464.5 318V360M465.5 313V370M466.5 315V361M467.5 319V373M468.5 319V367M469.5 322V370M470.5 330V369M471.5 315V374M472.5 318V359M473.5 319V357M474.5 309V356M475.5 325V352M476.5 327V358M477.5 334V356M478.5 335V356M479.5 336V355M480.5 336V355M481.5 335V352M482.5 335V349M483.5 330V353M484.5 333V351M485.5 333V352M486.5 329V352M487.5 328V361M488.5 333V351M489.5 333V352M490.5 335V355M491.5 331V353M492.5 334V355M493.5 335V355M494.5 331V353M495.5 333V353M496.5 332V353M497.5 333V353M498.5 333V354M499.5 336V351M500.5 333V352M501.5 333V356M502.5 333V353M503.5 335V356M504.5 335V351M505.5 335V350M506.5 333V351M507.5 333V349M508.5 330V350M509.5 332V348M510.5 335V349M511.5 335V348M512.5 336V352M513.5 332V355M514.5 334V354M515.5 333V352M516.5 333V350M517.5 334V356M518.5 333V358M519.5 331V357M520.5 332V354M521.5 333V354M522.5 335V357M523.5 334V356M524.5 334V354M525.5 333V352M526.5 330V357M527.5 335V350M528.5 331V354M529.5 331V357M530.5 333V355M531.5 334V355M532.5 335V354M533.5 331V367M534.5 330V356M535.5 333V352M536.5 335V350M537.5 334V362M538.5 330V352M539.5 332V349M540.5 328V354M541.5 329V356M542.5 327V353M543.5 332V353M544.5 330V353M545.5 333V356M546.5 327V358M547.5 326V359M548.5 325V364M549.5 323V360M550.5 324V362M551.5 321V361M552.5 321V358M553.5 324V358M554.5 327V359M555.5 328V362M556.5 327V361M557.5 328V360M558.5 326V358M559.5 325V359M560.5 327V356M561.5 329V358M562.5 317V366M563.5 326V357M564.5 329V358M565.5 327V365M566.5 328V355M567.5 327V359M568.5 332V365M569.5 328V362M570.5 331V366M571.5 326V366M572.5 331V358M573.5 328V363M574.5 327V358M575.5 321V368M576.5 327V357M577.5 328V354M578.5 324V355M579.5 324V360M580.5 322V359M581.5 325V361M582.5 320V361M583.5 313V363M584.5 324V357M585.5 314V366M586.5 323V363M587.5 325V364M588.5 328V364M589.5 329V356M590.5 328V358M591.5 328V353M592.5 317V373M593.5 316V368M594.5 326V359M595.5 325V359M596.5 322V355M597.5 330V357M598.5 326V359M599.5 311V375M600.5 323V367M601.5 324V364M602.5 320V360M603.5 319V366M604.5 330V357M605.5 327V356M606.5 317V370M607.5 321V367M608.5 323V365M609.5 316V364M610.5 323V368M611.5 322V365M612.5 321V369M613.5 326V364M614.5 313V372M615.5 322V366M616.5 326V366M617.5 322V359M618.5 322V364M619.5 320V367M620.5 319V367M621.5 316V366M622.5 303V384M623.5 314V386M624.5 327V370M625.5 328V364M626.5 328V363M627.5 325V356M628.5 332V354M629.5 334V360M630.5 333V351M631.5 332V352M632.5 327V362M633.5 324V362M634.5 331V353M635.5 333V352M636.5 329V353M637.5 334V351M638.5 331V354M639.5 330V353M640.5 330V358M641.5 332V360M642.5 331V356M643.5 331V355M644.5 331V353M645.5 328V356M646.5 332V351M647.5 331V350M648.5 333V353M649.5 326V350M650.5 330V353M651.5 321V360M652.5 330V353M653.5 331V351M654.5 330V352M655.5 332V349M656.5 329V350M657.5 323V357M658.5 329V351M659.5 327V352M660.5 329V353M661.5 330V352M662.5 333V355M663.5 332V354M664.5 327V351M665.5 327V356M666.5 324V354M667.5 328V355M668.5 329V357M669.5 333V353M670.5 334V352M671.5 334V357M672.5 334V361M673.5 327V357M674.5 332V352M675.5 331V352M676.5 333V354M677.5 334V358M678.5 332V353M679.5 330V356M680.5 331V354M681.5 328V355M682.5 328V364M683.5 321V358M684.5 328V358M685.5 333V359M686.5 316V365M687.5 291V389M688.5 310V371M689.5 320V362M690.5 332V353M691.5 337V346M692.5 340V344M710.5 334V357M711.5 326V361M712.5 311V367M713.5 321V357M714.5 326V359M715.5 327V358M716.5 319V358M717.5 327V358M718.5 329V358M719.5 324V359M720.5 331V351M721.5 333V356M722.5 327V353M723.5 326V357M724.5 328V358M725.5 330V358M726.5 332V354M727.5 329V354M728.5 332V355M729.5 331V354M730.5 331V355M731.5 333V354M732.5 328V355M733.5 329V352M734.5 333V352M735.5 330V353M736.5 329V355M737.5 323V357M738.5 334V357M739.5 331V360M740.5 332V358M741.5 328V357M742.5 328V355M743.5 327V355M744.5 332V355M745.5 332V355M746.5 331V364M747.5 331V361M748.5 327V351M749.5 332V356M750.5 333V353M751.5 330V356M752.5 323V366M753.5 327V359M754.5 331V363M755.5 330V354M756.5 327V357M757.5 328V352M758.5 328V352M759.5 326V354M760.5 328V358M761.5 326V351M762.5 325V354M763.5 319V356M764.5 327V352M765.5 327V358M766.5 331V359M767.5 327V357M768.5 324V356M769.5 322V367M770.5 329V357M771.5 330V352M772.5 328V351M773.5 321V355M774.5 327V351M775.5 330V354M776.5 330V353M777.5 333V354M778.5 320V354M779.5 327V358M780.5 325V355M781.5 331V354M782.5 329V353M783.5 317V352M784.5 332V354M785.5 329V353M786.5 331V368M787.5 331V354M788.5 331V356M789.5 328V354M790.5 327V353M791.5 331V351M792.5 327V350M793.5 330V353M794.5 328V354M795.5 328V352M796.5 330V355M797.5 328V354M798.5 320V367M799.5 328V357M800.5 330V357M801.5 330V359M802.5 331V358M803.5 331V365M804.5 332V351M805.5 329V352M806.5 321V362M807.5 317V360M808.5 328V353M809.5 329V356M810.5 327V361M811.5 327V356M812.5 329V360M813.5 331V359M814.5 324V356M815.5 328V354M816.5 325V361M817.5 319V364M818.5 325V355M819.5 331V351M820.5 330V354M821.5 331V351M822.5 333V362M823.5 330V356M824.5 327V355M825.5 331V356M826.5 329V358M827.5 327V356M828.5 328V353M829.5 327V357M830.5 324V359M831.5 328V357M832.5 331V359M833.5 330V356M834.5 333V359M835.5 333V357M836.5 330V359M837.5 328V351M838.5 327V357M839.5 326V355M840.5 326V359M841.5 330V360M842.5 329V357M843.5 330V356M844.5 327V356M845.5 328V356M846.5 327V358M847.5 328V354M848.5 331V355M849.5 330V354M850.5 331V360M851.5 329V356M852.5 329V359M853.5 328V352M854.5 329V351M855.5 325V354M856.5 329V359M857.5 328V351M858.5 329V352M859.5 327V351M860.5 330V358M861.5 328V356M862.5 324V362M863.5 329V357M864.5 330V352M865.5 330V357M866.5 328V354M867.5 329V353M868.5 331V352M869.5 331V350M870.5 332V349M871.5 326V352M872.5 330V357M873.5 329V359M874.5 328V361M875.5 327V356M876.5 330V354M877.5 326V354M878.5 318V366M879.5 327V357M880.5 326V357M881.5 324V357M882.5 329V356M883.5 319V360M884.5 327V353M885.5 328V358M886.5 328V358M887.5 321V365M888.5 331V373M889.5 330V356M890.5 327V359M891.5 327V360M892.5 330V359M893.5 325V364M894.5 331V358M895.5 331V358M896.5 330V360M897.5 325V356M898.5 327V357M899.5 325V355M900.5 327V355M901.5 325V359M902.5 326V358M903.5 327V356M904.5 318V358M905.5 327V358M906.5 329V361M907.5 329V357M908.5 329V351M909.5 331V357M910.5 334V357M911.5 324V361M912.5 326V372M913.5 328V361M914.5 327V369M915.5 326V361M916.5 328V359M917.5 328V358M918.5 326V352M919.5 328V356M920.5 327V358M921.5 328V360M922.5 328V357M923.5 330V355M924.5 327V357M925.5 327V357M926.5 313V372M927.5 324V363M928.5 329V361M929.5 330V362M930.5 325V362M931.5 324V363M932.5 325V360M933.5 316V376M934.5 326V357M935.5 331V361M936.5 323V375M937.5 331V356M938.5 328V354M939.5 330V357M940.5 328V359M941.5 321V356M942.5 327V354M943.5 324V355M944.5 323V358M945.5 327V362M946.5 333V360M947.5 324V358M948.5 324V359M949.5 319V358M950.5 321V357M951.5 321V365M952.5 325V358M953.5 323V361M954.5 321V359M955.5 317V360M956.5 321V356M957.5 308V368M958.5 319V358M959.5 325V362M960.5 328V367M961.5 332V363M962.5 328V359M963.5 329V366M964.5 328V358M965.5 326V359M966.5 326V361M967.5 325V359M968.5 310V372M969.5 322V361M970.5 311V363M971.5 326V363M972.5 324V364M973.5 325V358M974.5 326V357M975.5 322V356M976.5 326V358M977.5 324V360M978.5 331V353M979.5 323V356M980.5 325V357M981.5 324V354M982.5 326V355M983.5 324V352M984.5 322V357M985.5 323V359M986.5 310V358M987.5 327V362M988.5 328V357M989.5 321V359M990.5 311V375M991.5 318V363M992.5 317V369M993.5 310V360M994.5 320V377M995.5 325V357M996.5 322V364M997.5 328V362M998.5 327V358M999.5 327V354M1000.5 319V358M1001.5 323V362M1002.5 313V380M1003.5 326V358M1004.5 324V354M1005.5 324V369M1006.5 328V360M1007.5 331V361M1008.5 328V354M1009.5 328V351M1010.5 326V356M1011.5 327V360M1012.5 312V379M1013.5 323V365M1014.5 319V360M1015.5 321V359M1016.5 318V352M1017.5 322V357M1018.5 322V353M1019.5 326V353M1020.5 325V360M1021.5 329V359M1022.5 324V353M1023.5 324V362M1024.5 323V356M1025.5 325V356M1026.5 327V356M1027.5 323V354M1028.5 320V362M1029.5 324V362M1030.5 322V357M1031.5 318V361M1032.5 321V358M1033.5 312V366M1034.5 310V375M1035.5 322V363M1036.5 328V357M1037.5 326V361M1038.5 324V362M1039.5 326V364M1040.5 326V361M1041.5 321V360M1042.5 325V352M1043.5 322V355M1044.5 321V352M1045.5 326V361M1046.5 324V356M1047.5 327V363M1048.5 329V365M1049.5 330V358M1050.5 328V354M1051.5 321V359M1052.5 321V356M1053.5 322V361M1054.5 322V359M1055.5 308V375M1056.5 320V363M1057.5 321V356M1058.5 328V355M1059.5 326V353M1060.5 321V360M1061.5 328V360M1062.5 328V358M1063.5 326V358M1064.5 323V361M1065.5 329V356M1066.5 323V359M1067.5 320V353M1068.5 326V358M1069.5 323V361M1070.5 325V364M1071.5 317V362M1072.5 326V356M1073.5 330V358M1074.5 326V359M1075.5 313V375M1076.5 324V364M1077.5 325V361M1078.5 308V379M1079.5 320V365M1080.5 322V358M1081.5 321V359M1082.5 319V355M1083.5 317V361M1084.5 323V358M1085.5 321V356M1086.5 318V362M1087.5 319V360M1088.5 327V363M1089.5 325V358M1090.5 323V362M1091.5 319V364M1092.5 324V365M1093.5 328V358M1094.5 319V365M1095.5 324V363M1096.5 325V358M1097.5 318V368M1098.5 320V358M1099.5 313V374M1100.5 322V362M1101.5 322V375M1102.5 319V364M1103.5 321V361M1104.5 325V360M1105.5 327V358M1106.5 315V370M1107.5 329V365M1108.5 329V371M1109.5 327V364M1110.5 321V365M1111.5 323V362M1112.5 321V364M1113.5 325V366M1114.5 323V366M1115.5 323V359M1116.5 317V362M1117.5 309V364M1118.5 321V356M1119.5 327V358M1120.5 314V374M1121.5 324V364M1122.5 330V362M1123.5 325V360M1124.5 321V361M1125.5 322V357M1126.5 315V371M1127.5 325V357M1128.5 329V358M1129.5 325V362M1130.5 326V357M1131.5 327V359M1132.5 323V357M1133.5 329V355M1134.5 327V354M1135.5 326V362M1136.5 326V360M1137.5 330V365M1138.5 330V365M1139.5 322V362M1140.5 326V363M1141.5 327V363M1142.5 314V372M1143.5 324V361M1144.5 330V361M1145.5 325V362M1146.5 322V362M1147.5 330V357M1148.5 332V355M1149.5 332V354M1150.5 331V349M1151.5 336V353M1152.5 334V350M1153.5 332V351M1154.5 326V352M1155.5 333V350M1156.5 332V350M1157.5 335V352M1158.5 334V347M1159.5 333V350M1160.5 334V348M1161.5 332V352M1162.5 323V362M1163.5 330V355M1164.5 333V351M1165.5 335V349M1166.5 335V349M1167.5 334V348M1168.5 334V348M1169.5 336V349M1170.5 334V350M1171.5 335V349M1172.5 335V350M1173.5 336V348M1174.5 337V347M1175.5 339V344M1176.5 340V344M1177.5 338V346M1178.5 338V346M1179.5 335V348M1180.5 336V346M1181.5 334V348M1182.5 337V345M1183.5 338V345M1184.5 324V363M1185.5 307V378M1186.5 317V366M1187.5 320V365M1188.5 318V363M1189.5 313V370M1190.5 316V358M1191.5 325V356M1192.5 326V362M1193.5 321V366M1194.5 310V374M1195.5 319V362M1196.5 324V359M1197.5 319V365M1198.5 323V356M1199.5 325V369M1200.5 321V353M1201.5 322V361M1202.5 315V369M1203.5 311V370M1204.5 321V369M1205.5 319V359M1206.5 317V358M1207.5 322V361M1208.5 320V363M1209.5 326V366M1210.5 314V370M1211.5 321V360M1212.5 326V359M1213.5 325V357M1214.5 318V359M1215.5 322V361M1216.5 327V357M1217.5 325V356M1218.5 309V370M1219.5 321V359M1220.5 327V354M1221.5 317V372M1222.5 322V359M1223.5 324V359M1224.5 315V372M1225.5 325V361M1226.5 330V359M1227.5 314V370M1228.5 324V363M1229.5 327V356M1230.5 328V362M1231.5 319V371M1232.5 318V362M1233.5 319V365M1234.5 313V374M1235.5 322V363M1236.5 324V354M1237.5 326V361M1238.5 322V362M1239.5 327V361M1240.5 319V361M1241.5 319V359M1242.5 322V358M1243.5 329V360M1244.5 322V356M1245.5 320V369M1246.5 307V371M1247.5 310V382M1248.5 322V367M1249.5 320V359M1250.5 321V360M1251.5 329V358M1252.5 331V363M1253.5 330V358M1254.5 332V352M1255.5 333V353M1256.5 332V356M1257.5 334V350M1258.5 333V350M1259.5 336V350M1260.5 336V349M1261.5 336V346M1262.5 336V347M1263.5 337V345M1264.5 338V344M1265.5 339V345M1266.5 339V344M1267.5 339V345M1268.5 339V344M1269.5 339V344M1270.5 340V344M1271.5 340V344M1272.5 340V344M1273.5 340V344M1274.5 340V343" stroke="#77b5fe" stroke-width="1" shape-rendering="crispEdges" fill="none"/><rect x="1085" y="143" width="1" height="265" fill="#c8c8c8"/><rect x="1084" y="188" width="1" height="35" fill="#a06020" opacity=".8"/><rect x="1084" y="323" width="1" height="35" fill="#a06020" opacity=".8"/></svg><span class="t mono" style="left:172px;top:199px;font-size:13.0px;color:#fff;transform:scaleX(0.7690);transform-origin:0 0;">22%</span><span class="t mono" style="left:172px;top:333px;font-size:13.0px;color:#fff;transform:scaleX(0.7690);transform-origin:0 0;">-8%</span><svg style="left:0px;top:0px;" width="1904" height="710" viewBox="0 0 1904 710"><rect x="207" y="410" width="1697" height="5" fill="#363636"/><rect x="1269" y="411" width="600" height="4" fill="#a9bcd8"/><rect x="1269" y="411" width="600" height="1" fill="#fff"/><rect x="1269" y="411" width="1" height="4" fill="#fff"/><rect x="1868" y="411" width="1" height="4" fill="#fff"/><rect x="207" y="415" width="1697" height="1" fill="#0a0a0a"/><rect x="208" y="416" width="1696" height="1" fill="#8a8a8a"/><rect x="207" y="418" width="1697" height="20" fill="#1f1f1f"/><rect x="207" y="437" width="1697" height="1" fill="#8c8c8c"/><rect x="1903" y="418" width="1" height="20" fill="#8c8c8c"/><rect x="207" y="418" width="1697" height="1" fill="#d6d2b6"/><rect x="207" y="418" width="1" height="20" fill="#d6d2b6"/><rect x="207" y="438" width="1697" height="266" fill="#212121"/><rect x="207" y="438" width="1062" height="266" fill="#828282"/><rect x="207" y="438" width="1" height="266" fill="#444"/><rect x="217" y="438" width="1" height="266" fill="#d0d0d0"/><rect x="228" y="438" width="1" height="266" fill="#d0d0d0"/><rect x="239" y="438" width="1" height="266" fill="#d0d0d0"/><rect x="250" y="438" width="1" height="266" fill="#d0d0d0"/><rect x="260" y="438" width="1" height="266" fill="#d0d0d0"/><rect x="271" y="438" width="1" height="266" fill="#d0d0d0"/><rect x="282" y="438" width="1" height="266" fill="#d0d0d0"/><rect x="293" y="438" width="1" height="266" fill="#d0d0d0"/><rect x="303" y="438" width="1" height="266" fill="#d0d0d0"/><rect x="314" y="438" width="1" height="266" fill="#444"/><rect x="325" y="438" width="1" height="266" fill="#d0d0d0"/><rect x="336" y="438" width="1" height="266" fill="#d0d0d0"/><rect x="346" y="438" width="1" height="266" fill="#d0d0d0"/><rect x="357" y="438" width="1" height="266" fill="#d0d0d0"/><rect x="368" y="438" width="1" height="266" fill="#d0d0d0"/><rect x="379" y="438" width="1" height="266" fill="#d0d0d0"/><rect x="390" y="438" width="1" height="266" fill="#d0d0d0"/><rect x="400" y="438" width="1" height="266" fill="#d0d0d0"/><rect x="411" y="438" width="1" height="266" fill="#d0d0d0"/><rect x="422" y="438" width="1" height="266" fill="#444"/><rect x="433" y="438" width="1" height="266" fill="#d0d0d0"/><rect x="443" y="438" width="1" height="266" fill="#d0d0d0"/><rect x="454" y="438" width="1" height="266" fill="#d0d0d0"/><rect x="465" y="438" width="1" height="266" fill="#d0d0d0"/><rect x="476" y="438" width="1" height="266" fill="#d0d0d0"/><rect x="486" y="438" width="1" height="266" fill="#d0d0d0"/><rect x="497" y="438" width="1" height="266" fill="#d0d0d0"/><rect x="508" y="438" width="1" height="266" fill="#d0d0d0"/><rect x="519" y="438" width="1" height="266" fill="#d0d0d0"/><rect x="529" y="438" width="1" height="266" fill="#444"/><rect x="540" y="438" width="1" height="266" fill="#d0d0d0"/><rect x="551" y="438" width="1" height="266" fill="#d0d0d0"/><rect x="562" y="438" width="1" height="266" fill="#d0d0d0"/><rect x="573" y="438" width="1" height="266" fill="#d0d0d0"/><rect x="583" y="438" width="1" height="266" fill="#d0d0d0"/><rect x="594" y="438" width="1" height="266" fill="#d0d0d0"/><rect x="605" y="438" width="1" height="266" fill="#d0d0d0"/><rect x="616" y="438" width="1" height="266" fill="#d0d0d0"/><rect x="626" y="438" width="1" height="266" fill="#d0d0d0"/><rect x="637" y="438" width="1" height="266" fill="#444"/><rect x="648" y="438" width="1" height="266" fill="#d0d0d0"/><rect x="659" y="438" width="1" height="266" fill="#d0d0d0"/><rect x="669" y="438" width="1" height="266" fill="#d0d0d0"/><rect x="680" y="438" width="1" height="266" fill="#d0d0d0"/><rect x="691" y="438" width="1" height="266" fill="#d0d0d0"/><rect x="702" y="438" width="1" height="266" fill="#d0d0d0"/><rect x="712" y="438" width="1" height="266" fill="#d0d0d0"/><rect x="723" y="438" width="1" height="266" fill="#d0d0d0"/><rect x="734" y="438" width="1" height="266" fill="#d0d0d0"/><rect x="745" y="438" width="1" height="266" fill="#444"/><rect x="756" y="438" width="1" height="266" fill="#d0d0d0"/><rect x="766" y="438" width="1" height="266" fill="#d0d0d0"/><rect x="777" y="438" width="1" height="266" fill="#d0d0d0"/><rect x="788" y="438" width="1" height="266" fill="#d0d0d0"/><rect x="799" y="438" width="1" height="266" fill="#d0d0d0"/><rect x="809" y="438" width="1" height="266" fill="#d0d0d0"/><rect x="820" y="438" width="1" height="266" fill="#d0d0d0"/><rect x="831" y="438" width="1" height="266" fill="#d0d0d0"/><rect x="842" y="438" width="1" height="266" fill="#d0d0d0"/><rect x="852" y="438" width="1" height="266" fill="#444"/><rect x="863" y="438" width="1" height="266" fill="#d0d0d0"/><rect x="874" y="438" width="1" height="266" fill="#d0d0d0"/><rect x="885" y="438" width="1" height="266" fill="#d0d0d0"/><rect x="895" y="438" width="1" height="266" fill="#d0d0d0"/><rect x="906" y="438" width="1" height="266" fill="#d0d0d0"/><rect x="917" y="438" width="1" height="266" fill="#d0d0d0"/><rect x="928" y="438" width="1" height="266" fill="#d0d0d0"/><rect x="939" y="438" width="1" height="266" fill="#d0d0d0"/><rect x="949" y="438" width="1" height="266" fill="#d0d0d0"/><rect x="960" y="438" width="1" height="266" fill="#444"/><rect x="971" y="438" width="1" height="266" fill="#d0d0d0"/><rect x="982" y="438" width="1" height="266" fill="#d0d0d0"/><rect x="992" y="438" width="1" height="266" fill="#d0d0d0"/><rect x="1003" y="438" width="1" height="266" fill="#d0d0d0"/><rect x="1014" y="438" width="1" height="266" fill="#d0d0d0"/><rect x="1025" y="438" width="1" height="266" fill="#d0d0d0"/><rect x="1035" y="438" width="1" height="266" fill="#d0d0d0"/><rect x="1046" y="438" width="1" height="266" fill="#d0d0d0"/><rect x="1057" y="438" width="1" height="266" fill="#d0d0d0"/><rect x="1068" y="438" width="1" height="266" fill="#444"/><rect x="1078" y="438" width="1" height="266" fill="#d0d0d0"/><rect x="1089" y="438" width="1" height="266" fill="#d0d0d0"/><rect x="1100" y="438" width="1" height="266" fill="#d0d0d0"/><rect x="1111" y="438" width="1" height="266" fill="#d0d0d0"/><rect x="1122" y="438" width="1" height="266" fill="#d0d0d0"/><rect x="1132" y="438" width="1" height="266" fill="#d0d0d0"/><rect x="1143" y="438" width="1" height="266" fill="#d0d0d0"/><rect x="1154" y="438" width="1" height="266" fill="#d0d0d0"/><rect x="1165" y="438" width="1" height="266" fill="#d0d0d0"/><rect x="1175" y="438" width="1" height="266" fill="#444"/><rect x="1186" y="438" width="1" height="266" fill="#d0d0d0"/><rect x="1197" y="438" width="1" height="266" fill="#d0d0d0"/><rect x="1208" y="438" width="1" height="266" fill="#d0d0d0"/><rect x="1218" y="438" width="1" height="266" fill="#d0d0d0"/><rect x="1229" y="438" width="1" height="266" fill="#d0d0d0"/><rect x="1240" y="438" width="1" height="266" fill="#d0d0d0"/><rect x="1251" y="438" width="1" height="266" fill="#d0d0d0"/><rect x="1261" y="438" width="1" height="266" fill="#d0d0d0"/><rect x="1869" y="438" width="35" height="266" fill="#828282"/><rect x="1875" y="438" width="1" height="266" fill="#d0d0d0"/><rect x="1886" y="438" width="1" height="266" fill="#d0d0d0"/><rect x="1897" y="438" width="1" height="266" fill="#d0d0d0"/><rect x="207" y="440" width="1697" height="1" fill="#555" opacity="0.9"/><rect x="207" y="440" width="1062" height="1" fill="#3c3c3c"/><rect x="1869" y="440" width="35" height="1" fill="#3c3c3c"/><rect x="207" y="472" width="1697" height="1" fill="#444" opacity="0.9"/><rect x="207" y="472" width="1062" height="1" fill="#3c3c3c"/><rect x="1869" y="472" width="35" height="1" fill="#3c3c3c"/><rect x="207" y="504" width="1697" height="1" fill="#444" opacity="0.9"/><rect x="207" y="504" width="1062" height="1" fill="#3c3c3c"/><rect x="1869" y="504" width="35" height="1" fill="#3c3c3c"/><rect x="207" y="536" width="1697" height="1" fill="#444" opacity="0.9"/><rect x="207" y="536" width="1062" height="1" fill="#3c3c3c"/><rect x="1869" y="536" width="35" height="1" fill="#3c3c3c"/><rect x="207" y="568" width="1697" height="1" fill="#555" opacity="0.9"/><rect x="207" y="568" width="1062" height="1" fill="#3c3c3c"/><rect x="1869" y="568" width="35" height="1" fill="#3c3c3c"/><rect x="207" y="571" width="1697" height="1" fill="#444" opacity="0.9"/><rect x="207" y="571" width="1062" height="1" fill="#3c3c3c"/><rect x="1869" y="571" width="35" height="1" fill="#3c3c3c"/><rect x="207" y="574" width="1697" height="1" fill="#555" opacity="0.9"/><rect x="207" y="574" width="1062" height="1" fill="#3c3c3c"/><rect x="1869" y="574" width="35" height="1" fill="#3c3c3c"/><rect x="207" y="606" width="1697" height="1" fill="#444" opacity="0.9"/><rect x="207" y="606" width="1062" height="1" fill="#3c3c3c"/><rect x="1869" y="606" width="35" height="1" fill="#3c3c3c"/><rect x="207" y="638" width="1697" height="1" fill="#444" opacity="0.9"/><rect x="207" y="638" width="1062" height="1" fill="#3c3c3c"/><rect x="1869" y="638" width="35" height="1" fill="#3c3c3c"/><rect x="207" y="670" width="1697" height="1" fill="#444" opacity="0.9"/><rect x="207" y="670" width="1062" height="1" fill="#3c3c3c"/><rect x="1869" y="670" width="35" height="1" fill="#3c3c3c"/><rect x="207" y="702" width="1697" height="1" fill="#555" opacity="0.9"/><rect x="207" y="702" width="1062" height="1" fill="#3c3c3c"/><rect x="1869" y="702" width="35" height="1" fill="#3c3c3c"/><rect x="199" y="440" width="6" height="1" fill="#555"/><rect x="201" y="472" width="4" height="1" fill="#555"/><rect x="199" y="504" width="6" height="1" fill="#555"/><rect x="201" y="536" width="4" height="1" fill="#555"/><rect x="199" y="568" width="6" height="1" fill="#555"/><rect x="199" y="574" width="6" height="1" fill="#555"/><rect x="201" y="606" width="4" height="1" fill="#555"/><rect x="199" y="638" width="6" height="1" fill="#555"/><rect x="201" y="670" width="4" height="1" fill="#555"/><rect x="199" y="702" width="6" height="1" fill="#555"/><rect x="1269" y="504" width="600" height="1" fill="#77b5fe"/><path d="M1284.5 492V518M1285.5 486V520M1286.5 467V532M1287.5 481V522M1288.5 488V516M1289.5 495V513M1290.5 493V512M1291.5 486V516M1292.5 490V516M1293.5 491V514M1294.5 491V517M1295.5 490V522M1296.5 488V519M1297.5 489V520M1298.5 489V517M1299.5 484V518M1300.5 490V516M1301.5 485V514M1302.5 493V515M1303.5 488V518M1304.5 487V517M1305.5 489V519M1306.5 491V517M1307.5 496V519M1308.5 487V521M1309.5 491V519M1310.5 489V519M1311.5 486V520M1312.5 491V517M1313.5 490V515M1314.5 491V522M1315.5 485V521M1316.5 487V514M1317.5 493V515M1318.5 489V517M1319.5 490V522M1320.5 490V520M1321.5 492V522M1322.5 492V521M1323.5 493V515M1324.5 490V516M1325.5 490V518M1326.5 482V531M1327.5 487V521M1328.5 483V519M1329.5 489V518M1330.5 489V520M1331.5 490V520M1332.5 490V514M1333.5 491V512M1334.5 491V513M1335.5 489V518M1336.5 490V520M1337.5 490V519M1338.5 490V524M1339.5 490V521M1340.5 484V517M1341.5 491V517M1342.5 492V519M1343.5 481V532M1344.5 490V522M1345.5 491V519M1346.5 492V519M1347.5 489V521M1348.5 487V524M1349.5 493V521M1350.5 493V521M1351.5 493V514M1352.5 492V517M1353.5 497V516M1354.5 498V517M1355.5 493V515M1356.5 496V514M1357.5 484V525M1358.5 487V515M1359.5 488V515M1360.5 489V513M1361.5 489V518M1362.5 494V519M1363.5 492V518M1364.5 486V529M1365.5 493V516M1366.5 493V514M1367.5 493V519M1368.5 491V523M1369.5 494V517M1370.5 493V516M1371.5 491V519M1372.5 478V532M1373.5 488V522M1374.5 493V516M1375.5 491V518M1376.5 483V527M1377.5 495V518M1378.5 495V517M1379.5 492V520M1380.5 480V527M1381.5 489V522M1382.5 492V519M1383.5 490V517M1384.5 492V515M1385.5 495V516M1386.5 495V518M1387.5 490V516M1388.5 487V522M1389.5 488V518M1390.5 492V514M1391.5 495V514M1392.5 491V511M1393.5 489V516M1394.5 489V522M1395.5 489V516M1396.5 490V515M1397.5 491V520M1398.5 489V515M1399.5 495V518M1400.5 493V516M1401.5 491V515M1402.5 493V513M1403.5 492V515M1404.5 494V521M1405.5 496V519M1406.5 493V518M1407.5 493V518M1408.5 492V519M1409.5 487V521M1410.5 492V515M1411.5 491V518M1412.5 490V519M1413.5 493V520M1414.5 497V521M1415.5 492V518M1416.5 497V516M1417.5 494V513M1418.5 495V520M1419.5 490V522M1420.5 492V519M1421.5 492V516M1422.5 491V523M1423.5 493V514M1424.5 489V517M1425.5 489V521M1426.5 495V519M1427.5 490V516M1428.5 491V522M1429.5 493V523M1430.5 493V519M1431.5 493V523M1432.5 494V516M1433.5 495V520M1434.5 494V518M1435.5 483V516M1436.5 488V514M1437.5 494V520M1438.5 489V518M1439.5 487V518M1440.5 491V520M1441.5 490V522M1442.5 493V519M1443.5 496V521M1444.5 490V518M1445.5 494V518M1446.5 492V517M1447.5 495V514M1448.5 491V518M1449.5 489V522M1450.5 489V518M1451.5 485V518M1452.5 476V531M1453.5 487V521M1454.5 492V517M1455.5 491V521M1456.5 490V518M1457.5 477V525M1458.5 487V520M1459.5 487V518M1460.5 494V515M1461.5 493V517M1462.5 495V519M1463.5 492V524M1464.5 491V523M1465.5 494V519M1466.5 495V519M1467.5 492V516M1468.5 492V517M1469.5 491V514M1470.5 494V516M1471.5 494V520M1472.5 492V520M1473.5 490V526M1474.5 490V518M1475.5 492V521M1476.5 494V519M1477.5 488V521M1478.5 493V521M1479.5 487V522M1480.5 490V514M1481.5 490V515M1482.5 488V521M1483.5 488V520M1484.5 490V522M1485.5 480V522M1486.5 483V522M1487.5 492V523M1488.5 488V518M1489.5 492V530M1490.5 495V521M1491.5 496V516M1492.5 490V517M1493.5 493V519M1494.5 488V515M1495.5 491V518M1496.5 487V515M1497.5 485V520M1498.5 490V515M1499.5 487V521M1500.5 470V538M1501.5 483V525M1502.5 490V523M1503.5 488V519M1504.5 491V520M1505.5 487V518M1506.5 485V517M1507.5 474V527M1508.5 485V519M1509.5 486V518M1510.5 483V520M1511.5 480V521M1512.5 485V521M1513.5 480V519M1514.5 488V522M1515.5 483V520M1516.5 488V518M1517.5 488V520M1518.5 482V520M1519.5 486V521M1520.5 487V522M1521.5 487V524M1522.5 489V524M1523.5 487V520M1524.5 488V524M1525.5 480V536M1526.5 488V518M1527.5 487V521M1528.5 490V520M1529.5 485V516M1530.5 482V519M1531.5 473V533M1532.5 485V525M1533.5 491V519M1534.5 477V525M1535.5 491V522M1536.5 492V518M1537.5 489V517M1538.5 485V524M1539.5 485V520M1540.5 487V521M1541.5 477V523M1542.5 466V538M1543.5 480V526M1544.5 488V533M1545.5 493V520M1546.5 490V519M1547.5 483V517M1548.5 489V520M1549.5 493V516M1550.5 493V519M1551.5 490V532M1552.5 491V526M1553.5 491V527M1554.5 488V522M1555.5 491V525M1556.5 489V522M1557.5 493V527M1558.5 490V521M1559.5 492V523M1560.5 492V525M1561.5 490V520M1562.5 488V521M1563.5 484V523M1564.5 467V541M1565.5 481V527M1566.5 488V525M1567.5 484V523M1568.5 483V526M1569.5 490V518M1570.5 492V522M1571.5 487V524M1572.5 490V525M1573.5 487V524M1574.5 493V524M1575.5 490V527M1576.5 491V528M1577.5 492V524M1578.5 492V522M1579.5 489V521M1580.5 470V524M1581.5 486V532M1582.5 474V539M1583.5 464V525M1584.5 488V522M1585.5 486V525M1586.5 469V545M1587.5 482V530M1588.5 480V522M1589.5 479V518M1590.5 480V521M1591.5 484V521M1592.5 479V521M1593.5 479V514M1594.5 482V518M1595.5 474V515M1596.5 480V522M1597.5 485V516M1598.5 487V519M1599.5 482V517M1600.5 488V518M1601.5 484V516M1602.5 490V518M1603.5 490V522M1604.5 482V518M1605.5 480V519M1606.5 480V518M1607.5 484V523M1608.5 466V541M1609.5 480V527M1610.5 488V526M1611.5 488V519M1612.5 482V525M1613.5 480V524M1614.5 487V526M1615.5 489V521M1616.5 487V519M1617.5 490V525M1618.5 485V524M1619.5 486V523M1620.5 486V527M1621.5 480V523M1622.5 484V520M1623.5 489V518M1624.5 488V523M1625.5 481V520M1626.5 481V524M1627.5 481V520M1628.5 484V523M1629.5 464V541M1630.5 479V527M1631.5 478V526M1632.5 484V521M1633.5 490V527M1634.5 490V524M1635.5 490V521M1636.5 483V520M1637.5 480V522M1638.5 481V522M1639.5 471V528M1640.5 480V524M1641.5 484V525M1642.5 481V524M1643.5 486V524M1644.5 486V524M1645.5 483V522M1646.5 483V524M1647.5 485V535M1648.5 481V523M1649.5 470V541M1650.5 483V527M1651.5 484V525M1652.5 464V545M1653.5 479V530M1654.5 486V522M1655.5 479V530M1656.5 491V519M1657.5 493V524M1658.5 492V519M1659.5 491V514M1660.5 487V519M1661.5 487V520M1662.5 481V520M1663.5 483V521M1664.5 483V523M1665.5 479V517M1666.5 484V516M1667.5 484V521M1668.5 485V523M1669.5 486V519M1670.5 483V522M1671.5 488V523M1672.5 487V524M1673.5 470V540M1674.5 483V527M1675.5 490V526M1676.5 490V524M1677.5 489V520M1678.5 477V521M1679.5 489V517M1680.5 489V516M1681.5 485V522M1682.5 482V519M1683.5 486V514M1684.5 484V514M1685.5 488V515M1686.5 491V524M1687.5 489V521M1688.5 490V523M1689.5 483V527M1690.5 485V529M1691.5 486V524M1692.5 491V524M1693.5 486V524M1694.5 471V540M1695.5 473V540M1696.5 487V521M1697.5 492V529M1698.5 491V522M1699.5 492V524M1700.5 491V525M1701.5 493V526M1702.5 488V523M1703.5 479V527M1704.5 488V521M1705.5 487V524M1706.5 483V532M1707.5 489V528M1708.5 494V528M1709.5 493V523M1710.5 490V520M1711.5 481V529M1712.5 491V524M1713.5 490V520M1714.5 492V521M1715.5 488V521M1716.5 471V538M1717.5 484V525M1718.5 483V523M1719.5 483V522M1720.5 488V524M1721.5 491V522M1722.5 491V520M1723.5 490V518M1724.5 498V511M1725.5 493V516M1726.5 498V510M1727.5 497V512M1728.5 496V512M1729.5 496V514M1730.5 497V511M1731.5 498V515M1732.5 497V518M1733.5 499V512M1734.5 495V517M1735.5 493V516M1736.5 482V527M1737.5 490V519M1738.5 495V516M1739.5 499V515M1740.5 499V510M1741.5 501V510M1742.5 500V509M1743.5 499V511M1744.5 499V509M1745.5 499V512M1746.5 500V511M1747.5 501V508M1748.5 501V508M1749.5 502V508M1750.5 503V506M1751.5 501V507M1752.5 499V509M1753.5 498V511M1754.5 494V510M1755.5 500V510M1756.5 499V508M1757.5 502V509M1758.5 483V525M1759.5 462V544M1760.5 478V529M1761.5 478V522M1762.5 489V525M1763.5 479V524M1764.5 483V527M1765.5 484V524M1766.5 478V523M1767.5 472V542M1768.5 466V540M1769.5 480V530M1770.5 488V520M1771.5 487V527M1772.5 486V521M1773.5 479V527M1774.5 482V520M1775.5 486V527M1776.5 475V523M1777.5 467V535M1778.5 481V524M1779.5 485V518M1780.5 482V531M1781.5 475V534M1782.5 486V525M1783.5 470V528M1784.5 471V535M1785.5 484V524M1786.5 489V522M1787.5 490V520M1788.5 491V522M1789.5 486V522M1790.5 488V518M1791.5 484V520M1792.5 465V535M1793.5 480V526M1794.5 486V523M1795.5 482V523M1796.5 489V518M1797.5 486V528M1798.5 472V538M1799.5 484V525M1800.5 486V520M1801.5 480V514M1802.5 488V523M1803.5 489V521M1804.5 481V534M1805.5 487V527M1806.5 479V524M1807.5 477V530M1808.5 478V536M1809.5 476V524M1810.5 492V519M1811.5 486V518M1812.5 489V518M1813.5 489V522M1814.5 490V523M1815.5 482V528M1816.5 482V527M1817.5 485V521M1818.5 481V523M1819.5 474V529M1820.5 478V531M1821.5 466V549M1822.5 480V532M1823.5 480V531M1824.5 482V520M1825.5 484V518M1826.5 491V519M1827.5 491V518M1828.5 488V517M1829.5 486V519M1830.5 493V512M1831.5 495V512M1832.5 497V513M1833.5 496V516M1834.5 501V511M1835.5 498V510M1836.5 499V508M1837.5 501V508M1838.5 500V507M1839.5 501V508M1840.5 501V508M1841.5 502V509M1842.5 502V507M1843.5 502V507M1844.5 502V506M1845.5 503V506M1846.5 503V506M1847.5 503V506M1848.5 503V506" stroke="#77b5fe" stroke-width="1" shape-rendering="crispEdges" fill="none"/><rect x="1269" y="638" width="600" height="1" fill="#77b5fe"/><path d="M1284.5 628V651M1285.5 623V651M1286.5 608V664M1287.5 619V654M1288.5 617V655M1289.5 625V647M1290.5 621V657M1291.5 624V651M1292.5 628V651M1293.5 626V655M1294.5 624V650M1295.5 621V651M1296.5 624V653M1297.5 628V657M1298.5 625V657M1299.5 625V665M1300.5 621V657M1301.5 625V653M1302.5 629V652M1303.5 627V651M1304.5 619V655M1305.5 623V663M1306.5 626V656M1307.5 628V657M1308.5 625V654M1309.5 628V652M1310.5 629V650M1311.5 627V655M1312.5 625V652M1313.5 627V656M1314.5 628V656M1315.5 631V654M1316.5 629V651M1317.5 632V654M1318.5 628V654M1319.5 627V654M1320.5 625V653M1321.5 626V653M1322.5 628V654M1323.5 622V660M1324.5 628V654M1325.5 626V655M1326.5 620V663M1327.5 627V654M1328.5 628V651M1329.5 628V650M1330.5 627V650M1331.5 629V650M1332.5 629V651M1333.5 627V651M1334.5 624V654M1335.5 627V655M1336.5 625V653M1337.5 625V654M1338.5 626V651M1339.5 630V652M1340.5 632V651M1341.5 630V653M1342.5 627V653M1343.5 619V664M1344.5 617V654M1345.5 627V657M1346.5 618V656M1347.5 623V652M1348.5 625V652M1349.5 628V658M1350.5 628V655M1351.5 629V656M1352.5 629V652M1353.5 627V652M1354.5 625V648M1355.5 624V654M1356.5 626V653M1357.5 614V654M1358.5 626V648M1359.5 626V652M1360.5 631V651M1361.5 627V650M1362.5 628V653M1363.5 631V653M1364.5 624V650M1365.5 627V653M1366.5 631V654M1367.5 628V653M1368.5 628V654M1369.5 629V654M1370.5 629V648M1371.5 627V651M1372.5 617V664M1373.5 623V654M1374.5 623V652M1375.5 628V653M1376.5 628V651M1377.5 626V665M1378.5 626V651M1379.5 628V652M1380.5 618V659M1381.5 626V652M1382.5 624V653M1383.5 625V654M1384.5 627V649M1385.5 631V650M1386.5 625V657M1387.5 614V660M1388.5 624V653M1389.5 624V652M1390.5 627V649M1391.5 628V647M1392.5 627V667M1393.5 631V656M1394.5 621V655M1395.5 628V651M1396.5 631V653M1397.5 631V650M1398.5 629V650M1399.5 627V654M1400.5 627V652M1401.5 623V657M1402.5 629V649M1403.5 627V649M1404.5 624V650M1405.5 626V651M1406.5 626V653M1407.5 624V653M1408.5 627V650M1409.5 625V650M1410.5 626V650M1411.5 626V653M1412.5 628V652M1413.5 626V652M1414.5 626V650M1415.5 623V649M1416.5 622V651M1417.5 625V654M1418.5 626V652M1419.5 624V648M1420.5 625V652M1421.5 628V652M1422.5 622V648M1423.5 624V649M1424.5 621V650M1425.5 625V648M1426.5 621V654M1427.5 627V652M1428.5 628V652M1429.5 629V656M1430.5 629V650M1431.5 622V652M1432.5 630V651M1433.5 627V656M1434.5 625V658M1435.5 627V650M1436.5 627V659M1437.5 624V652M1438.5 624V652M1439.5 628V657M1440.5 625V652M1441.5 624V652M1442.5 627V650M1443.5 626V652M1444.5 623V648M1445.5 628V648M1446.5 624V653M1447.5 627V659M1448.5 619V663M1449.5 627V654M1450.5 631V654M1451.5 627V651M1452.5 615V663M1453.5 624V654M1454.5 623V651M1455.5 625V653M1456.5 627V654M1457.5 616V657M1458.5 624V659M1459.5 626V656M1460.5 630V653M1461.5 631V656M1462.5 629V651M1463.5 626V655M1464.5 627V648M1465.5 627V653M1466.5 624V653M1467.5 622V650M1468.5 622V658M1469.5 619V656M1470.5 625V655M1471.5 624V653M1472.5 626V654M1473.5 630V653M1474.5 628V652M1475.5 628V664M1476.5 624V654M1477.5 621V652M1478.5 623V651M1479.5 625V655M1480.5 628V660M1481.5 622V659M1482.5 619V653M1483.5 625V655M1484.5 629V649M1485.5 627V648M1486.5 627V651M1487.5 623V649M1488.5 617V655M1489.5 628V656M1490.5 627V654M1491.5 629V653M1492.5 625V647M1493.5 619V663M1494.5 620V658M1495.5 629V650M1496.5 622V657M1497.5 623V656M1498.5 621V650M1499.5 623V654M1500.5 610V669M1501.5 621V658M1502.5 623V652M1503.5 621V649M1504.5 616V659M1505.5 621V653M1506.5 626V651M1507.5 613V659M1508.5 622V655M1509.5 627V652M1510.5 626V651M1511.5 618V653M1512.5 624V649M1513.5 624V653M1514.5 620V653M1515.5 617V653M1516.5 618V656M1517.5 623V653M1518.5 618V653M1519.5 620V649M1520.5 622V649M1521.5 620V651M1522.5 616V659M1523.5 617V653M1524.5 621V661M1525.5 621V657M1526.5 623V659M1527.5 629V658M1528.5 618V661M1529.5 620V651M1530.5 621V652M1531.5 613V665M1532.5 622V655M1533.5 621V657M1534.5 625V661M1535.5 629V662M1536.5 629V659M1537.5 629V659M1538.5 628V654M1539.5 628V651M1540.5 619V656M1541.5 622V654M1542.5 607V669M1543.5 618V658M1544.5 615V670M1545.5 625V653M1546.5 624V655M1547.5 628V660M1548.5 620V657M1549.5 626V659M1550.5 628V660M1551.5 621V656M1552.5 625V657M1553.5 622V656M1554.5 624V657M1555.5 625V658M1556.5 629V654M1557.5 625V655M1558.5 625V662M1559.5 625V656M1560.5 628V661M1561.5 627V653M1562.5 627V652M1563.5 623V656M1564.5 608V672M1565.5 619V660M1566.5 623V653M1567.5 627V650M1568.5 627V648M1569.5 629V654M1570.5 622V660M1571.5 625V657M1572.5 624V655M1573.5 624V652M1574.5 627V660M1575.5 625V663M1576.5 621V662M1577.5 622V658M1578.5 624V657M1579.5 628V662M1580.5 625V660M1581.5 626V657M1582.5 624V655M1583.5 619V662M1584.5 627V652M1585.5 621V657M1586.5 609V676M1587.5 620V662M1588.5 626V658M1589.5 628V657M1590.5 621V676M1591.5 619V661M1592.5 625V654M1593.5 627V652M1594.5 626V669M1595.5 619V654M1596.5 622V650M1597.5 615V657M1598.5 616V660M1599.5 614V655M1600.5 622V655M1601.5 619V655M1602.5 624V660M1603.5 617V660M1604.5 618V658M1605.5 619V662M1606.5 616V657M1607.5 618V660M1608.5 607V672M1609.5 615V660M1610.5 619V655M1611.5 622V656M1612.5 623V660M1613.5 622V659M1614.5 623V657M1615.5 621V655M1616.5 619V656M1617.5 622V653M1618.5 624V656M1619.5 610V664M1620.5 620V654M1621.5 624V655M1622.5 622V663M1623.5 623V652M1624.5 622V656M1625.5 627V663M1626.5 624V659M1627.5 626V664M1628.5 621V663M1629.5 605V672M1630.5 618V660M1631.5 621V655M1632.5 615V665M1633.5 622V654M1634.5 623V651M1635.5 619V652M1636.5 618V657M1637.5 617V656M1638.5 620V659M1639.5 615V659M1640.5 606V660M1641.5 619V655M1642.5 608V664M1643.5 617V660M1644.5 620V662M1645.5 624V661M1646.5 625V654M1647.5 623V656M1648.5 624V656M1649.5 610V672M1650.5 621V660M1651.5 622V657M1652.5 605V676M1653.5 618V662M1654.5 624V654M1655.5 628V649M1656.5 622V654M1657.5 626V660M1658.5 623V657M1659.5 619V654M1660.5 619V659M1661.5 628V651M1662.5 625V650M1663.5 628V658M1664.5 620V659M1665.5 622V658M1666.5 616V657M1667.5 622V660M1668.5 621V658M1669.5 621V662M1670.5 625V657M1671.5 623V656M1672.5 621V658M1673.5 610V671M1674.5 621V659M1675.5 622V657M1676.5 620V660M1677.5 619V659M1678.5 616V658M1679.5 605V673M1680.5 615V675M1681.5 626V662M1682.5 626V659M1683.5 623V661M1684.5 616V657M1685.5 623V657M1686.5 626V666M1687.5 623V652M1688.5 622V654M1689.5 613V669M1690.5 609V668M1691.5 620V656M1692.5 625V653M1693.5 617V655M1694.5 611V671M1695.5 621V659M1696.5 620V655M1697.5 619V663M1698.5 623V665M1699.5 621V660M1700.5 622V659M1701.5 622V655M1702.5 617V660M1703.5 623V653M1704.5 621V651M1705.5 624V655M1706.5 613V651M1707.5 619V655M1708.5 604V666M1709.5 620V656M1710.5 621V652M1711.5 621V653M1712.5 623V650M1713.5 619V650M1714.5 608V661M1715.5 618V654M1716.5 611V669M1717.5 619V658M1718.5 620V653M1719.5 625V658M1720.5 623V657M1721.5 616V652M1722.5 620V657M1723.5 620V652M1724.5 627V649M1725.5 629V651M1726.5 632V648M1727.5 633V647M1728.5 633V650M1729.5 633V653M1730.5 628V650M1731.5 632V647M1732.5 631V646M1733.5 632V648M1734.5 633V650M1735.5 629V649M1736.5 620V659M1737.5 627V652M1738.5 630V648M1739.5 631V652M1740.5 628V648M1741.5 632V647M1742.5 635V647M1743.5 632V646M1744.5 633V646M1745.5 631V646M1746.5 634V645M1747.5 631V648M1748.5 635V643M1749.5 636V642M1750.5 635V643M1751.5 635V643M1752.5 632V643M1753.5 632V644M1754.5 630V647M1755.5 634V644M1756.5 634V644M1757.5 635V643M1758.5 616V663M1759.5 604V675M1760.5 611V661M1761.5 617V659M1762.5 618V659M1763.5 624V660M1764.5 623V665M1765.5 624V658M1766.5 623V663M1767.5 622V664M1768.5 607V671M1769.5 619V659M1770.5 614V659M1771.5 615V662M1772.5 619V658M1773.5 619V663M1774.5 623V663M1775.5 619V657M1776.5 623V662M1777.5 608V667M1778.5 619V657M1779.5 625V656M1780.5 621V656M1781.5 620V659M1782.5 611V661M1783.5 624V661M1784.5 611V667M1785.5 621V663M1786.5 619V661M1787.5 618V658M1788.5 617V659M1789.5 625V659M1790.5 624V659M1791.5 622V672M1792.5 606V668M1793.5 616V656M1794.5 624V660M1795.5 626V655M1796.5 621V660M1797.5 622V670M1798.5 612V669M1799.5 622V670M1800.5 622V657M1801.5 616V662M1802.5 618V654M1803.5 618V654M1804.5 616V657M1805.5 619V664M1806.5 616V653M1807.5 613V662M1808.5 604V660M1809.5 616V655M1810.5 617V663M1811.5 623V664M1812.5 617V662M1813.5 613V660M1814.5 622V654M1815.5 620V651M1816.5 621V651M1817.5 618V653M1818.5 606V660M1819.5 614V655M1820.5 618V661M1821.5 607V679M1822.5 619V664M1823.5 602V660M1824.5 616V664M1825.5 615V657M1826.5 625V654M1827.5 624V652M1828.5 613V650M1829.5 629V650M1830.5 628V647M1831.5 631V657M1832.5 632V646M1833.5 633V646M1834.5 632V645M1835.5 632V643M1836.5 635V642M1837.5 634V641M1838.5 635V642M1839.5 635V642M1840.5 635V641M1841.5 636V641M1842.5 636V641M1843.5 636V641M1844.5 637V641M1845.5 637V641M1846.5 637V641M1847.5 637V640M1848.5 637V640" stroke="#77b5fe" stroke-width="1" shape-rendering="crispEdges" fill="none"/></svg><div style="left:0px;top:409px;width:205px;height:1px;background:#4a4a4a;"></div><div style="left:206px;top:408px;width:1698px;height:1px;background:#6e6e6e;"></div><div style="left:207px;top:409px;width:1697px;height:2px;background:#363636;"></div><div style="left:0px;top:705px;width:206px;height:1px;background:#3a3a3a;"></div><div style="left:207px;top:705px;width:1697px;height:1px;background:#7c7c7c;"></div><svg style="left:0px;top:117px;" width="8" height="6" viewBox="0 0 8 6"><path d="M0 5.500l3.500-4.500 3.500 4.500z" fill="#ddd"/></svg><span class="t jp" style="left:39px;top:118px;font-size:17px;color:#fff;font-weight:bold;transform:scaleX(0.85);">1</span><div style="left:89px;top:118px;width:16px;height:16px;background:#1b1b1b;border:1px solid #555;border-radius:2px;"></div><span class="t jp" style="left:89px;top:118.5px;width:16px;text-align:center;font-size:15.500px;color:#f7dc28;transform:scaleX(0.86);">M</span><div style="left:109px;top:118px;width:16px;height:16px;background:#1b1b1b;border:1px solid #555;border-radius:2px;"></div><span class="t jp" style="left:109px;top:118.5px;width:16px;text-align:center;font-size:15.500px;color:#22e095;transform:scaleX(0.86);">S</span><div style="left:129px;top:118px;width:16px;height:16px;background:#1b1b1b;border:1px solid #555;border-radius:2px;"></div><span class="t jp" style="left:129px;top:118.5px;width:16px;text-align:center;font-size:15.500px;color:#f47868;transform:scaleX(0.86);">R</span><div style="left:1px;top:137px;width:148px;height:14px;background:#f0f0f0;"></div><span class="t mono" style="left:4px;top:138px;font-size:13.0px;color:#000;transform:scaleX(0.7690);transform-origin:0 0;">digion_demo.wav</span><div style="left:1px;top:162px;width:42px;height:14px;background:#f0f0f0;"></div><span class="t mono" style="left:13px;top:163px;font-size:13.0px;color:#a8a8a8;transform:scaleX(0.7690);transform-origin:0 0;">120</span><span class="t jp" style="left:47px;top:162px;font-size:14px;color:#8c8c8c;font-weight:bold;letter-spacing:-1.19px;">bpm</span><svg style="left:88px;top:161px;" width="18" height="18" viewBox="0 0 18 18"><path d="M13.800 6.300A5.800 5.800 0 1 1 8 3.500" fill="none" stroke="#5a5a5a" stroke-width="1.300"/><path d="M8.500 0.500l4.500 2.500-4 3z" fill="#5a5a5a"/></svg><svg style="left:126px;top:160px;" width="21" height="21" viewBox="0 0 21 21"><circle cx="10.300" cy="10.300" r="9.300" fill="none" stroke="#5a5a5a" stroke-width="1.100"/><path d="M10.300 8.500v6" stroke="#5a5a5a" stroke-width="1.300"/><circle cx="10.300" cy="6.300" r="0.800" fill="#5a5a5a"/></svg><div style="left:1px;top:188px;width:25px;height:25px;background:transparent;border:1px solid #3c3c3c;border-radius:2px;"></div><svg style="left:1px;top:188px;" width="25" height="25" viewBox="0 0 25 25"><path d="M6.500 4v17M12.500 4v17M18.500 4v17" stroke="#777" stroke-width="1" stroke-dasharray="2 1.500 20"/><circle cx="6.500" cy="8.500" r="2.300" fill="#7a4a50"/><circle cx="12.500" cy="16" r="2.300" fill="#7a4a50"/><circle cx="18.500" cy="8.500" r="2.300" fill="#7a4a50"/><path d="M4.200 8.500h4.600M10.200 16h4.600M16.200 8.500h4.600" stroke="#aaa" stroke-width="0.800"/></svg><svg style="left:29px;top:192px;" width="24" height="17" viewBox="0 0 24 17"><path d="M6 3.500h-4.500v10h4.500" fill="none" stroke="#777" stroke-width="1"/><path d="M6 1.500l3 2-3 2zM6 11.500l3 2-3 2z" fill="#777"/><rect x="11" y="0.500" width="11" height="6" fill="#8a8a8a"/><rect x="11" y="9.500" width="11" height="6" fill="#8a8a8a"/><path d="M12.500 3.500h8M12.500 12.500h8M14.500 1.500l2 2-2 2M14.500 10.500l2 2-2 2" stroke="#8a2a38" stroke-width="1" fill="none"/></svg><svg style="left:0px;top:414px;" width="8" height="6" viewBox="0 0 8 6"><path d="M0 5.500l3.500-4.500 3.500 4.500z" fill="#ddd"/></svg><span class="t jp" style="left:39px;top:415px;font-size:17px;color:#666;font-weight:bold;transform:scaleX(0.85);">2</span><div style="left:89px;top:415px;width:16px;height:16px;background:#1b1b1b;border:1px solid #555;border-radius:2px;"></div><span class="t jp" style="left:89px;top:415.5px;width:16px;text-align:center;font-size:15.500px;color:#f7dc28;transform:scaleX(0.86);">M</span><div style="left:109px;top:415px;width:16px;height:16px;background:#1b1b1b;border:1px solid #555;border-radius:2px;"></div><span class="t jp" style="left:109px;top:415.5px;width:16px;text-align:center;font-size:15.500px;color:#22e095;transform:scaleX(0.86);">S</span><div style="left:129px;top:415px;width:16px;height:16px;background:#1b1b1b;border:1px solid #555;border-radius:2px;"></div><span class="t jp" style="left:129px;top:415.5px;width:16px;text-align:center;font-size:15.500px;color:#f47868;transform:scaleX(0.86);">R</span><div style="left:1px;top:434px;width:148px;height:14px;background:#f0f0f0;"></div><span class="t mono" style="left:4px;top:435px;font-size:13.0px;color:#9a9a9a;transform:scaleX(0.7690);transform-origin:0 0;">digion_demo.wav</span><div style="left:1px;top:459px;width:42px;height:14px;background:#f0f0f0;"></div><span class="t mono" style="left:13px;top:460px;font-size:13.0px;color:#a8a8a8;transform:scaleX(0.7690);transform-origin:0 0;">120</span><span class="t jp" style="left:47px;top:459px;font-size:14px;color:#8c8c8c;font-weight:bold;letter-spacing:-1.19px;">bpm</span><svg style="left:88px;top:458px;" width="18" height="18" viewBox="0 0 18 18"><path d="M13.800 6.300A5.800 5.800 0 1 1 8 3.500" fill="none" stroke="#5a5a5a" stroke-width="1.300"/><path d="M8.500 0.500l4.500 2.500-4 3z" fill="#5a5a5a"/></svg><svg style="left:126px;top:457px;" width="21" height="21" viewBox="0 0 21 21"><circle cx="10.300" cy="10.300" r="9.300" fill="none" stroke="#5a5a5a" stroke-width="1.100"/><path d="M10.300 8.500v6" stroke="#5a5a5a" stroke-width="1.300"/><circle cx="10.300" cy="6.300" r="0.800" fill="#5a5a5a"/></svg><div style="left:1px;top:485px;width:25px;height:25px;background:transparent;border:1px solid #3c3c3c;border-radius:2px;"></div><svg style="left:1px;top:485px;" width="25" height="25" viewBox="0 0 25 25"><path d="M6.500 4v17M12.500 4v17M18.500 4v17" stroke="#777" stroke-width="1" stroke-dasharray="2 1.500 20"/><circle cx="6.500" cy="8.500" r="2.300" fill="#7a4a50"/><circle cx="12.500" cy="16" r="2.300" fill="#7a4a50"/><circle cx="18.500" cy="8.500" r="2.300" fill="#7a4a50"/><path d="M4.200 8.500h4.600M10.200 16h4.600M16.200 8.500h4.600" stroke="#aaa" stroke-width="0.800"/></svg><svg style="left:29px;top:489px;" width="24" height="17" viewBox="0 0 24 17"><path d="M6 3.500h-4.500v10h4.500" fill="none" stroke="#777" stroke-width="1"/><path d="M6 1.500l3 2-3 2zM6 11.500l3 2-3 2z" fill="#777"/><rect x="11" y="0.500" width="11" height="6" fill="#8a8a8a"/><rect x="11" y="9.500" width="11" height="6" fill="#8a8a8a"/><path d="M12.500 3.500h8M12.500 12.500h8M14.500 1.500l2 2-2 2M14.500 10.500l2 2-2 2" stroke="#8a2a38" stroke-width="1" fill="none"/></svg><div style="left:0px;top:0px;width:1917px;height:81px;background:#fff;"></div><svg style="left:0px;top:3px;" width="15" height="15" viewBox="0 0 15 15"><path d="M0 1.5h12.5l2-1.5-3 13H0z" fill="#f5a623"/><path d="M0.5 10C2 10 2.6 4 4.3 4S6.6 11 8.4 11 10.5 4 12.5 3.5" fill="none" stroke="#fff" stroke-width="1.6"/></svg><span class="t jp" style="left:20px;top:5px;font-size:12px;color:#000;letter-spacing:-0.11px;">DigiOnSound Lite - [digion_demo03_sample.wav *]</span><svg style="left:1790px;top:0px;" width="127" height="22" viewBox="0 0 127 22"><path d="M6 9.5h11" stroke="#000" stroke-width="1"/><path d="M51.5 6.5h7v7h-7z M53.5 6.5v-2h7v7h-2" fill="none" stroke="#000" stroke-width="1"/><path d="M97 4l10 10M107 4l-10 10" stroke="#000" stroke-width="1.1"/></svg><svg style="left:3px;top:23px;" width="18" height="17" viewBox="0 0 18 17"><path d="M6 1h7l3 3v11H6z" fill="#eee" stroke="#c8c8c8" stroke-width="1"/><path d="M1 5h11.5l1.5-1-2.5 10H0z" fill="#f5a623"/><path d="M1.5 11C3 11 3.4 7 4.8 7S6.6 12 8 12s2-4.5 3.6-5" fill="none" stroke="#fff" stroke-width="1.2" opacity=".85"/></svg><span class="t jp" style="left:26px;top:25.5px;font-size:12px;color:#000;transform:scaleX(0.7659);transform-origin:0 0;">ファイル(F)</span><span class="t jp" style="left:89px;top:25.5px;font-size:12px;color:#000;transform:scaleX(0.9375);transform-origin:0 0;">編集(E)</span><span class="t jp" style="left:141px;top:25.5px;font-size:12px;color:#000;transform:scaleX(0.9625);transform-origin:0 0;">表示(V)</span><span class="t jp" style="left:193px;top:25.5px;font-size:12px;color:#000;transform:scaleX(0.7368);transform-origin:0 0;">エフェクト(T)</span><span class="t jp" style="left:262px;top:25.5px;font-size:12px;color:#000;transform:scaleX(0.8298);transform-origin:0 0;">スペシャル(I)</span><span class="t jp" style="left:334px;top:25.5px;font-size:12px;color:#000;transform:scaleX(0.8345);transform-origin:0 0;">ツール(O)</span><span class="t jp" style="left:392px;top:25.5px;font-size:12px;color:#000;transform:scaleX(0.7612);transform-origin:0 0;">コントロール(C)</span><span class="t jp" style="left:473px;top:25.5px;font-size:12px;color:#000;transform:scaleX(0.7753);transform-origin:0 0;">ウィンドウ(W)</span><span class="t jp" style="left:548px;top:25.5px;font-size:12px;color:#000;transform:scaleX(0.8828);transform-origin:0 0;">ヘルプ(H)</span><div style="left:1860px;top:24px;width:17px;height:17px;background:#fbfbfb;border:1px solid #e2e2e2;"></div><div style="left:1879px;top:24px;width:17px;height:17px;background:#fbfbfb;border:1px solid #e2e2e2;"></div><div style="left:1898px;top:24px;width:17px;height:17px;background:#fbfbfb;border:1px solid #e2e2e2;"></div><svg style="left:1860px;top:24px;" width="56" height="17" viewBox="0 0 56 17"><path d="M5 11.5h6" stroke="#5a6b80" stroke-width="2"/><path d="M23.5 8.5h5v4h-5z M25.5 8v-2.5h5v4.5h-2" fill="none" stroke="#5a6b80" stroke-width="1.3"/><path d="M43.5 5.5l6 6M49.5 5.5l-6 6" stroke="#5a6b80" stroke-width="1.8"/></svg><div style="left:0px;top:42px;width:1917px;height:1px;background:#a0a0a0;"></div><div style="left:4px;top:44px;width:767px;height:29px;background:#f0f0f0;"></div><div style="left:771px;top:43px;width:1px;height:30px;background:#fafafa;"></div><svg style="left:0px;top:45px;" width="4" height="28" viewBox="0 0 4 28"><rect x="0" y="2" width="1" height="1.500" fill="#a0a0a0"/><rect x="0" y="7" width="1" height="1.500" fill="#a0a0a0"/><rect x="0" y="12" width="1" height="1.500" fill="#a0a0a0"/><rect x="0" y="17" width="1" height="1.500" fill="#a0a0a0"/><rect x="0" y="22" width="1" height="1.500" fill="#a0a0a0"/><rect x="0" y="27" width="1" height="1.500" fill="#a0a0a0"/></svg><svg style="left:0px;top:0px;" width="780" height="80" viewBox="0 0 780 80"><path d="M12.800 51.700h8.200l2.500 2.500v12h-10.700z" fill="#fff" stroke="#000" stroke-width="1.500"/><path d="M21 51.700v2.500h2.500" fill="none" stroke="#000" stroke-width="1"/><path d="M38.800 65v-10.300h4.500l1 2.600h8.800v7.700z" fill="#f4f4f4" stroke="#000" stroke-width="1.500"/><path d="M45 55.500h8" stroke="#000" stroke-width="1.200"/><path d="M66.5 51.5h12l2.5 2.5v12h-14.500z M69.500 51.500v5h8v-5 M69.500 66v-5.500h9v5.500" fill="none" stroke="#bdbdbd" stroke-width="1.200"/><path d="M106.500 56v-2.500h-15v9.500h14M109.500 58.500h-12M100.500 55.500l-3 3 3 3M109.500 58.500v7.800h-7.500" fill="none" stroke="#bdbdbd" stroke-width="1.200"/><path d="M126 52.500h-4.500v13.500h4.500M125 59.500h12.500M134.500 56.500l3 3-3 3" fill="none" stroke="#bdbdbd" stroke-width="1.200"/><rect x="144.5" y="44.5" width="27" height="27" fill="#cce4f7" stroke="#8fc4f0"/><circle cx="158" cy="58" r="9" fill="none" stroke="#000" stroke-width="1.5"/><path d="M155.500 62v-8.500l7-1.200v8.500" fill="none" stroke="#000" stroke-width="1.300"/><path d="M155.500 54.800l7-1.200" stroke="#000" stroke-width="2"/><ellipse cx="154.300" cy="62.200" rx="1.800" ry="1.400" fill="#000"/><ellipse cx="161.300" cy="61" rx="1.800" ry="1.400" fill="#000"/><rect x="174" y="46" width="1" height="25" fill="#8a8a8a"/><path d="M184 62.500c2-5 9-6.500 14 0" fill="none" stroke="#bdbdbd" stroke-width="2.200"/><path d="M183 57l0.500 6.500 6.500-0.500z" fill="#bdbdbd"/><path d="M227 62.500c-2-5-9-6.500-14 0" fill="none" stroke="#bdbdbd" stroke-width="2.200"/><path d="M228 57l-0.500 6.500-6.500-0.500z" fill="#bdbdbd"/><path d="M252 51.500h-10.500v15h10.500M245 55l10 8M245 63l10-8" fill="none" stroke="#bdbdbd" stroke-width="1.200"/><circle cx="255.500" cy="54.500" r="1.500" fill="none" stroke="#bdbdbd"/><circle cx="255.500" cy="63.500" r="1.500" fill="none" stroke="#bdbdbd"/><path d="M270.500 64.500h-2v-13h9M271.500 54.500h7l3 3v9h-10z M275 58v6" fill="none" stroke="#bdbdbd" stroke-width="1.200" stroke-dasharray="none"/><path d="M300 64.500h-3.500v-12h10v2M300 52.500l1.500-2 1.500 2M301.500 55.500h7l3 3v8h-10z M304 60h6M304 63h6" fill="none" stroke="#bdbdbd" stroke-width="1.200"/><path d="M322 53.500h13v13M326.500 49v13.500h13" fill="none" stroke="#bdbdbd" stroke-width="1.200"/><path d="M364 63.500h-12.500v-11h16v8M366.500 62v6M363.500 65h6M354 58h11M357 56l-2 2 2 2M360 56l2 2-2 2" fill="none" stroke="#bdbdbd" stroke-width="1.200"/><path d="M377.500 57h8l-4 4.500z" fill="#7a7a7a"/><path d="M395 52.500h14M399 52v-2.500h6v2.500M396.500 53l0.800 13.500h9.400l0.800-13.500M400 55v9.500M402 55v9.500M404 55v9.500" fill="none" stroke="#bdbdbd" stroke-width="1.200"/><rect x="419" y="46" width="1" height="25" fill="#8a8a8a"/><path d="M427.500 51.500h11M430 49.500l-2.500 2 2.500 2M436 49.500l2.500 2-2.500 2" fill="none" stroke="#000" stroke-width="1"/><circle cx="437.5" cy="60" r="4.100" fill="none" stroke="#000" stroke-width="1"/><path d="M440.6 63.1l5 4.300" stroke="#000" stroke-width="1.100"/><path d="M435.3 60h4.400" stroke="#000" stroke-width="1"/><path d="M437.5 57.8v4.400" stroke="#000" stroke-width="1"/><path d="M457.500 49.500v11M455.500 52l2-2.500 2 2.500M455.500 58l2 2.500 2-2.500" fill="none" stroke="#000" stroke-width="1"/><circle cx="465.5" cy="60" r="4.100" fill="none" stroke="#000" stroke-width="1"/><path d="M468.6 63.1l5 4.300" stroke="#000" stroke-width="1.100"/><path d="M463.3 60h4.400" stroke="#000" stroke-width="1"/><path d="M465.5 57.8v4.400" stroke="#000" stroke-width="1"/><path d="M482.500 51.500h5M485.500 49.500l2.500 2-2.500 2M499 51.500h-6M495.500 49.500l-2.500 2 2.500 2" fill="none" stroke="#000" stroke-width="1"/><circle cx="492.5" cy="60" r="4.100" fill="none" stroke="#000" stroke-width="1"/><path d="M495.6 63.1l5 4.300" stroke="#000" stroke-width="1.100"/><path d="M490.3 60h4.400" stroke="#000" stroke-width="1"/><path d="M512.500 49v4.500M510.500 51.500l2 2.500 2-2.500M512.500 63.500v-5M510.500 60.500l2-2.500 2 2.500" fill="none" stroke="#000" stroke-width="1"/><circle cx="520.5" cy="60" r="4.100" fill="none" stroke="#000" stroke-width="1"/><path d="M523.6 63.1l5 4.300" stroke="#000" stroke-width="1.100"/><path d="M518.3 60h4.400" stroke="#000" stroke-width="1"/><path d="M538.500 51.500h20M541 49.500l-2.500 2 2.500 2M556 49.500l2.500 2-2.500 2" fill="none" stroke="#000" stroke-width="1"/><rect x="538.500" y="55.500" width="20" height="11" fill="#fff" stroke="#000" stroke-width="1.300"/><path d="M541 61h15M545 58.500v5M552 58.500v5" stroke="#000" stroke-width="1.600"/><rect x="563.5" y="44.500" width="27.500" height="27" fill="#cce4f7" stroke="#8fc4f0"/><rect x="591.5" y="44.500" width="27.500" height="27" fill="#cce4f7" stroke="#8fc4f0"/><rect x="674.5" y="44.500" width="27.500" height="27" fill="#cce4f7" stroke="#8fc4f0"/><rect x="567.500" y="52.500" width="20" height="14" fill="#fff" stroke="#000" stroke-width="1.500"/><path d="M570.500 56v7.500l6-3.750z" fill="#000"/><rect x="579.500" y="58" width="4.500" height="4.500" fill="none" stroke="#000" stroke-width="1.200"/><rect x="595.500" y="52.500" width="20" height="14" fill="#fff" stroke="#000" stroke-width="1.500"/><path d="M600 55v9M605.500 55v9M611 55v9" stroke="#000" stroke-width="1"/><circle cx="600" cy="61" r="1.600" fill="#000"/><circle cx="605.500" cy="58" r="1.600" fill="#000"/><circle cx="611" cy="60.500" r="1.600" fill="#000"/><rect x="622.500" y="52.500" width="20" height="14" fill="#fff" stroke="#000" stroke-width="1.500"/><path d="M625.500 56.500h14M625.500 59.500h14" stroke="#000" stroke-width="1.200"/><path d="M629.500 57v6" stroke="#000" stroke-width="1.200"/><path d="M632 60.500h7l-3.500 4z" fill="#000"/><rect x="650" y="52.500" width="20" height="14" fill="#fff" stroke="#000" stroke-width="1.500"/><circle cx="660" cy="59.500" r="4" fill="#000"/><path d="M652.500 59.500h15M654.500 57v5M665.500 57v5" stroke="#000" stroke-width="1.300"/><path d="M657.500 57l2.500 2.500-2.500 2.500M662.500 57l-2.500 2.500 2.500 2.500" stroke="#fff" stroke-width="1" fill="none"/><rect x="679" y="52.500" width="20" height="14" fill="#fff" stroke="#000" stroke-width="1.500"/><rect x="682" y="55" width="5.500" height="3.500" fill="none" stroke="#000" stroke-width="1.200"/><rect x="690.500" y="55" width="5.500" height="3.500" fill="none" stroke="#000" stroke-width="1.200"/><rect x="681.500" y="60.500" width="6.500" height="4" fill="#000"/><rect x="690.500" y="61" width="5.500" height="3.500" fill="none" stroke="#000" stroke-width="1.200"/><rect x="704" y="46" width="1" height="25" fill="#c0c0c0"/><path d="M714 60a8 8 0 0 1 5-8M725 49.500a8 8 0 0 1 5 8M729 62a8 8 0 0 1-5 5M718 67a8 8 0 0 1-4-4" fill="none" stroke="#d8d8d8" stroke-width="2.200"/><path d="M723 47l5 2-4 3.500z M721 70l-5-2 4-3.500z" fill="#d8d8d8"/><text x="716.500" y="62" font-family="Liberation Sans, sans-serif" font-size="8" fill="#cfcfcf" font-weight="bold">Hz</text><rect x="739" y="46" width="1" height="25" fill="#8a8a8a"/><rect x="746" y="52.500" width="20" height="14" fill="#fff" stroke="#000" stroke-width="1.500"/><circle cx="756" cy="59.500" r="5.200" fill="#000"/><path d="M752.500 60.500c1-3.500 2.500-3.500 3.500-1s2.500 2.500 3.500-1" fill="none" stroke="#fff" stroke-width="1.200"/></svg><div style="left:0px;top:72px;width:1917px;height:3px;background:linear-gradient(#fff,#9a9a9a);"></div><div style="left:0px;top:75px;width:1917px;height:6px;background:#232221;"></div><div style="left:0px;top:74px;width:958px;height:5px;background:#6b6b6b;"></div><div style="left:0px;top:79px;width:938px;height:2px;background:#fff;"></div><div style="left:491px;top:75px;width:1px;height:3px;background:#222;"></div><div style="left:1904px;top:75px;width:13px;height:912px;background:#f0f0f0;border-left:1px solid #fff;border-right:1px solid #f8f8f8;"></div><svg style="left:1903.5px;top:75px;" width="14" height="912" viewBox="0 0 14 912"><path d="M3.500 4.500l4-3.500 4 3.500" fill="none" stroke="#c8c8c8" stroke-width="1.500"/><path d="M3.500 868l4 3.500 4-3.500" fill="none" stroke="#c8c8c8" stroke-width="1.500"/><circle cx="7" cy="886.500" r="4.500" fill="none" stroke="#333" stroke-width="1"/><path d="M4.500 886.500h5M7 884v5" stroke="#333" stroke-width="1"/><circle cx="7" cy="902" r="4.500" fill="none" stroke="#333" stroke-width="1"/><path d="M4.500 902h5" stroke="#333" stroke-width="1"/></svg><div style="left:0px;top:987px;width:1917px;height:17px;background:#f0f0f0;"></div><svg style="left:0px;top:987px;" width="1917" height="17" viewBox="0 0 1917 17"><path d="M4.500 4l-3.500 3.500 3.500 3.500" fill="none" stroke="#c0c0c0" stroke-width="1.500"/><path d="M1861.500 4l3.500 3.500-3.500 3.500" fill="none" stroke="#c0c0c0" stroke-width="1.500"/><circle cx="1877.500" cy="6.500" r="4.500" fill="none" stroke="#222" stroke-width="1"/><path d="M1875 6.500h5M1877.500 4v5M1881 10l4.500 4" stroke="#222" stroke-width="1"/><circle cx="1894" cy="6.500" r="4.500" fill="none" stroke="#222" stroke-width="1"/><path d="M1891.500 6.500h5M1897.500 10l4.500 4" stroke="#222" stroke-width="1"/><path d="M1903 14.500h11" stroke="#333" stroke-width="1"/></svg><div style="left:0px;top:1004px;width:1917px;height:1px;background:#d0d0d0;"></div><div style="left:0px;top:1005px;width:1917px;height:20px;background:#f0f0f0;"></div><div style="left:0px;top:1018px;width:1917px;height:1px;background:#d8d8d8;"></div><div style="left:0px;top:1019px;width:1917px;height:6px;background:#f0f0f0;"></div><div style="left:1632px;top:1006px;width:1px;height:12px;background:#d0d0d0;"></div><div style="left:1839px;top:1006px;width:1px;height:12px;background:#d0d0d0;"></div><div style="left:1816px;top:1022px;width:1px;height:3px;background:#d0d0d0;"></div><div style="left:1846px;top:1022px;width:1px;height:3px;background:#d0d0d0;"></div><div style="left:1882px;top:1022px;width:1px;height:3px;background:#d0d0d0;"></div><div style="left:0px;top:1006px;width:1917px;height:12px;background:transparent;overflow:hidden;"><span class="t jp" style="left:-5px;top:3px;font-size:12px;color:#000;letter-spacing:-0.5px;">00:00:40.78</span><span class="t jp" style="left:1639.5px;top:3px;font-size:12px;color:#000;letter-spacing:-0.55px;">44 100Hz 24Bit</span><span class="t jp" style="left:1847px;top:3px;font-size:12px;color:#000;letter-spacing:-0.5px;">x2048</span></div><div style="left:179px;top:466px;width:299px;height:113px;background:#232221;border:1px solid;border-color:#707070 #7c7c7c #7c7c7c #6a6a6a;box-shadow:inset 0 0 0 2px #3a3a3a;"></div><div style="left:180px;top:467px;width:297px;height:21px;background:linear-gradient(#484848,#363636);"></div><div style="left:180px;top:488px;width:297px;height:1px;background:#1c1c1c;"></div><span class="t jp" style="left:185px;top:472.5px;font-size:12px;color:#8c8c8c;font-weight:300;letter-spacing:-0.22px;">コントローラー</span><svg style="left:415px;top:468px;" width="60" height="20" viewBox="0 0 60 20"><path d="M6.500 9v-5.500h10v5.500h-5" fill="none" stroke="#ccc" stroke-width="1.200"/><path d="M6.500 3.500h10" stroke="#ccc" stroke-width="2"/><path d="M4.500 13.500l5-4.500M6 8.500h3.500v3.500" fill="none" stroke="#ccc" stroke-width="1.100"/><path d="M25 8.500h10" stroke="#ccc" stroke-width="1.200"/><path d="M43.500 4.500l9 9M52.500 4.500l-9 9" stroke="#ccc" stroke-width="1.200"/></svg><span class="t jp" style="left:205px;top:496px;font-size:20px;color:#fff;letter-spacing:-0.38px;">00<i>:</i>00<i>:</i>40<i>.</i>78</span><svg style="left:0px;top:0px;" width="480" height="580" viewBox="0 0 480 580"><path d="M197 528.500v9l-7.500-4.500zM204.500 528.500v9l-7.500-4.500z" fill="#d8d8d8"/><path d="M222 527.500l9 5.500-9 5.500z" fill="none" stroke="#2fd058" stroke-width="1.700"/><rect x="247.500" y="528.500" width="9" height="9" fill="none" stroke="#d8d8d8" stroke-width="1.700"/><path d="M271.500 528.500v9l7.500-4.500zM279 528.500v9l7.500-4.500z" fill="#d8d8d8"/><path d="M302 528v10M309 528v10" stroke="#d8d8d8" stroke-width="2"/><circle cx="332.800" cy="533" r="5.700" fill="#7a2a35"/><path d="M359 528v10M364.500 533h13M368.500 529.500l-4 3.500 4 3.500" fill="none" stroke="#5a5a5a" stroke-width="1.100"/><path d="M389 537h11a4 4 0 0 0 0-8h-2M400 529h-10.500a4 4 0 0 0 0 8M396.500 526.500l3.200 2.500-3.200 2.500M393.500 534.500l-3.200 2.500 3.200 2.500" fill="none" stroke="#c4c4c4" stroke-width="1.200"/><path d="M424.500 526v12" stroke="#d8d8d8" stroke-width="1.200" stroke-dasharray="3 2"/><path d="M422 523.500h5l-2.500 3z" fill="#d8d8d8"/><path d="M429.500 533h11M433.500 529.500l-4 3.500 4 3.500" fill="none" stroke="#d8d8d8" stroke-width="1.200"/><path d="M465.500 526v12" stroke="#d8d8d8" stroke-width="1.200" stroke-dasharray="3 2"/><path d="M463 523.500h5l-2.500 3z" fill="#d8d8d8"/><path d="M449.500 533h11M456.500 529.500l4 3.500-4 3.500" fill="none" stroke="#d8d8d8" stroke-width="1.200"/></svg><div style="left:193px;top:557px;width:13px;height:13px;background:transparent;border:1px solid #b0b0b0;"></div><span class="t jp" style="left:211px;top:558px;font-size:11px;color:#c8c8c8;letter-spacing:-0.06px;">再生しながら録音</span><span class="t jp" style="left:323px;top:558px;font-size:11px;color:#c8c8c8;letter-spacing:0.00px;">録音可能時間</span><span class="t jp" style="left:404px;top:556px;font-size:14px;color:#a8a8a8;letter-spacing:-0.38px;">24<i>:</i>37<i>:</i>03</span><div style="left:500px;top:461px;width:348px;height:321px;background:#232221;border:1px solid;border-color:#707070 #7c7c7c #7c7c7c #6a6a6a;box-shadow:inset 0 0 0 2px #3a3a3a;"></div><div style="left:501px;top:462px;width:346px;height:21px;background:linear-gradient(#484848,#363636);"></div><div style="left:501px;top:483px;width:346px;height:1px;background:#1c1c1c;"></div><span class="t jp" style="left:506px;top:467.5px;font-size:12px;color:#8c8c8c;font-weight:300;letter-spacing:-0.19px;">エフェクトランチャー</span><svg style="left:788px;top:463px;" width="56" height="18" viewBox="0 0 56 18"><path d="M4 7.500h10" stroke="#ccc" stroke-width="1.200"/><path d="M21 13.500h10" stroke="#ccc" stroke-width="1.200"/><path d="M41.500 4l9 9M50.500 4l-9 9" stroke="#ccc" stroke-width="1.200"/></svg><div style="left:513px;top:490px;width:92px;height:16px;background:#555;border:1px solid #6a6a6a;"></div><span class="t jp" style="left:533.5px;top:493px;font-size:11px;color:#fff;font-weight:bold;letter-spacing:-0.60px;">エフェクト</span><div style="left:606px;top:490px;width:92px;height:16px;background:#1e1e1e;border:1px solid #555;border-bottom:none;"></div><span class="t jp" style="left:626.5px;top:493px;font-size:11px;color:#e0e0e0;font-weight:bold;letter-spacing:-0.05px;">スペシャル</span><div style="left:504px;top:507px;width:341px;height:1px;background:#555;"></div><div style="left:515px;top:520px;width:73px;height:47px;background:#333;border:1px solid #e0375a;"></div><span class="t jp" style="left:535.75px;top:524px;font-size:10.5px;color:#6e6e6e;font-weight:bold;letter-spacing:0.00px;">レベル</span><svg style="left:516px;top:521px;" width="71" height="45" viewBox="0 0 71 45"><path d="M25 24h4l5.500-5v16l-5.500-5h-4z" fill="#8e8e8e"/><path d="M38 22a6 6 0 0 1 0 10M41 19a10 10 0 0 1 0 16" fill="none" stroke="#8e8e8e" stroke-width="1.600"/></svg><div style="left:591px;top:521px;width:71px;height:45px;background:#333;"></div><span class="t jp" style="left:599.0px;top:524px;font-size:10.5px;color:#6e6e6e;font-weight:bold;letter-spacing:-1.28px;">ノーマライズ</span><svg style="left:591px;top:521px;" width="71" height="45" viewBox="0 0 71 45"><path d="M22 20.500h27" stroke="#8e8e8e" stroke-width="1" stroke-dasharray="1.500 1"/><path d="M35.500 26v8" stroke="#8e8e8e" stroke-width="1.800"/><path d="M32 28l3.500-5.500 3.500 5.500z" fill="#8e8e8e"/><path d="M35.500 34v5" stroke="#8e8e8e" stroke-width="1.500" stroke-dasharray="1 1"/></svg><div style="left:666px;top:521px;width:71px;height:45px;background:#333;"></div><span class="t jp" style="left:691.0px;top:524px;font-size:10.5px;color:#6e6e6e;font-weight:bold;letter-spacing:0.00px;">挿入</span><span class="t jp" style="left:676.75px;top:554px;font-size:10.5px;color:#6e6e6e;font-weight:bold;letter-spacing:-0.56px;">サイレンス</span><svg style="left:666px;top:521px;" width="71" height="45" viewBox="0 0 71 45"><path d="M24.500 17v9" stroke="#8e8e8e" stroke-width="1.800"/><path d="M21 24.500l3.500 5 3.500-5z" fill="#8e8e8e"/><circle cx="40" cy="23" r="6" fill="none" stroke="#8e8e8e" stroke-width="1.500"/><path d="M36 27.500l8-9" stroke="#8e8e8e" stroke-width="1.500"/></svg><div style="left:741px;top:521px;width:71px;height:45px;background:#333;"></div><span class="t jp" style="left:766.0px;top:524px;font-size:10.5px;color:#6e6e6e;font-weight:bold;letter-spacing:0.00px;">挿入</span><span class="t jp" style="left:749.5px;top:554px;font-size:10.5px;color:#6e6e6e;font-weight:bold;letter-spacing:-1.45px;">メトロノーム</span><svg style="left:741px;top:521px;" width="71" height="45" viewBox="0 0 71 45"><path d="M24.500 17v9" stroke="#8e8e8e" stroke-width="1.800"/><path d="M21 24.500l3.500 5 3.500-5z" fill="#8e8e8e"/><path d="M37.500 16.500h4l4 12.500h-12z" fill="none" stroke="#8e8e8e" stroke-width="1.500"/><path d="M34.500 26h10.500v3h-11.500z" fill="#8e8e8e"/><path d="M39 26l4.500-9.500" stroke="#8e8e8e" stroke-width="1.300"/></svg><div style="left:516px;top:570px;width:71px;height:45px;background:#333;"></div><span class="t jp" style="left:524.5px;top:573px;font-size:10.5px;color:#6e6e6e;font-weight:bold;letter-spacing:-1.50px;">ピッチシフト</span><svg style="left:516px;top:570px;" width="71" height="45" viewBox="0 0 71 45"><path d="M28 37v-10.500l8-2v10.500" fill="none" stroke="#8e8e8e" stroke-width="1.400"/><path d="M28 27.500l8-2" stroke="#8e8e8e" stroke-width="2.200"/><ellipse cx="26.300" cy="37.200" rx="2.300" ry="1.700" fill="#8e8e8e"/><ellipse cx="34.300" cy="35.200" rx="2.300" ry="1.700" fill="#8e8e8e"/><path d="M50 24v13" stroke="#8e8e8e" stroke-width="1.500" stroke-dasharray="1 1"/><path d="M46.500 24l3.500-5.500 3.500 5.500zM46.500 36l3.500 5.500 3.500-5.500z" fill="#8e8e8e"/></svg><div style="left:591px;top:570px;width:71px;height:45px;background:#333;"></div><span class="t jp" style="left:594.25px;top:573px;font-size:10.5px;color:#6e6e6e;font-weight:bold;letter-spacing:-2.41px;">タイムストレッチ</span><svg style="left:591px;top:570px;" width="71" height="45" viewBox="0 0 71 45"><circle cx="35.500" cy="26" r="6" fill="#8e8e8e"/><path d="M35.500 22v4.500h3.500" fill="none" stroke="#333" stroke-width="1.200"/><path d="M22 37h27" stroke="#8e8e8e" stroke-width="1.600" stroke-dasharray="9 1 1 1 1 1 1 1 9"/><path d="M24 33.500l-6 3.500 6 3.500zM47 33.500l6 3.500-6 3.500z" fill="#8e8e8e"/></svg><div style="left:666px;top:570px;width:71px;height:45px;background:#333;"></div><span class="t jp" style="left:673.25px;top:573px;font-size:10.5px;color:#6e6e6e;font-weight:bold;letter-spacing:-1.08px;">サウンド形式</span><svg style="left:666px;top:570px;" width="71" height="45" viewBox="0 0 71 45"><path d="M31 19.500h-6a4 4 0 0 0-4 4v12a4 4 0 0 0 4 4h9M43 39.500h4a4 4 0 0 0 4-4v-12a4 4 0 0 0-4-4h-7" fill="none" stroke="#8e8e8e" stroke-width="1.500"/><path d="M40 16l-5 3.500 5 3.500zM33 36l5 3.500-5 3.500z" fill="#8e8e8e"/><text x="29" y="34" font-family="Liberation Sans, sans-serif" font-size="11" font-weight="bold" fill="#8e8e8e">Hz</text></svg><div style="left:827px;top:521px;width:17px;height:240px;background:#1e1e1e;border:1px solid #555;"></div><svg style="left:827px;top:521px;" width="17" height="240" viewBox="0 0 17 240"><path d="M4.500 11l4-5 4 5z" fill="#4a4a4a"/><path d="M4.500 229l4 5 4-5z" fill="#4a4a4a"/></svg><div style="left:503px;top:760px;width:342px;height:19px;background:#2a2a2a;"></div><div style="left:827px;top:762px;width:1px;height:17px;background:#555;"></div><svg style="left:831px;top:764px;" width="11" height="15" viewBox="0 0 11 15"><path d="M5.500 2v11M2.500 5l3-3.500 3 3.500M2.500 10l3 3.500 3-3.500" fill="none" stroke="#fff" stroke-width="1.100"/></svg><div style="left:884px;top:457px;width:322px;height:409px;background:#232221;border:1px solid;border-color:#707070 #7c7c7c #7c7c7c #6a6a6a;box-shadow:inset 0 0 0 2px #3a3a3a;"></div><div style="left:885px;top:458px;width:320px;height:21px;background:linear-gradient(#484848,#363636);"></div><div style="left:885px;top:479px;width:320px;height:1px;background:#1c1c1c;"></div><span class="t jp" style="left:890px;top:463.5px;font-size:12px;color:#8c8c8c;font-weight:300;letter-spacing:-0.20px;">ミキサーコントロール</span><svg style="left:1146px;top:459px;" width="56" height="18" viewBox="0 0 56 18"><path d="M4 7.500h10" stroke="#ccc" stroke-width="1.200"/><path d="M21 13.500h10" stroke="#ccc" stroke-width="1.200"/><path d="M41 4l9 9M50 4l-9 9" stroke="#ccc" stroke-width="1.200"/></svg><div style="left:887px;top:480px;width:117px;height:19px;background:transparent;border:1px solid #4a4a4a;border-bottom:none;"></div><div style="left:1004px;top:480px;width:127px;height:19px;background:transparent;border:1px solid #4a4a4a;"></div><div style="left:1131px;top:480px;width:71px;height:19px;background:transparent;border:1px solid #4a4a4a;"></div><div style="left:888px;top:498px;width:116px;height:1px;background:#e0375a;"></div><span class="t jp" style="left:928.5px;top:485.5px;font-size:11px;color:#cfcfcf;font-weight:bold;letter-spacing:0.25px;">録音</span><span class="t jp" style="left:1019.5px;top:485.5px;font-size:11px;color:#cfcfcf;font-weight:bold;letter-spacing:-0.13px;">マスターボリューム</span><svg style="left:1133.5px;top:484px;" width="10" height="13" viewBox="0 0 10 13"><path d="M7 2v9.500l-5.500-4.750z" fill="#c8c8c8"/></svg><span class="t jp" style="left:1161px;top:483px;font-size:13px;color:#fff;font-weight:bold;">1</span><div style="left:887px;top:499px;width:1px;height:362px;background:#4a4a4a;"></div><div style="left:1004px;top:499px;width:1px;height:362px;background:#4a4a4a;"></div><div style="left:1131px;top:499px;width:1px;height:346px;background:#4a4a4a;"></div><div style="left:1201px;top:499px;width:1px;height:346px;background:#4a4a4a;"></div><div style="left:900px;top:525px;width:17px;height:17px;background:#5a5a5a;"></div><svg style="left:900px;top:525px;" width="17" height="17" viewBox="0 0 17 17"><path d="M3.1 8.5l4.1 4.2 7.1-8.5" fill="none" stroke="#fff" stroke-width="1.600"/></svg><span class="t jp" style="left:920px;top:528px;font-size:10.5px;color:#b4b4b4;font-weight:bold;letter-spacing:-1.50px;">ステレオ</span><div style="left:900px;top:548px;width:17px;height:17px;background:transparent;border:1px solid #8a8a8a;"></div><span class="t jp" style="left:920px;top:551px;font-size:10.5px;color:#b4b4b4;font-weight:bold;letter-spacing:-1.50px;">モノラル</span><div style="left:1017px;top:537px;width:17px;height:17px;background:#5a5a5a;"></div><svg style="left:1017px;top:537px;" width="17" height="17" viewBox="0 0 17 17"><path d="M3.1 8.5l4.1 4.2 7.1-8.5" fill="none" stroke="#fff" stroke-width="1.600"/></svg><span class="t jp" style="left:1037px;top:540px;font-size:10.5px;color:#b4b4b4;font-weight:bold;letter-spacing:-1.42px;">グループ切り替え</span><div style="left:1134px;top:510px;width:65px;height:15px;background:#fff;"></div><span class="t mono" style="left:1138px;top:512px;font-size:13.0px;color:#000;transform:scaleX(0.7690);transform-origin:0 0;">digion...</span><div style="left:1140px;top:532px;width:15px;height:15px;background:#5a5a5a;"></div><svg style="left:1140px;top:532px;" width="15" height="15" viewBox="0 0 15 15"><path d="M2.7 7.5l3.6 3.8 6.3-7.5" fill="none" stroke="#fff" stroke-width="1.600"/></svg><span class="t jp" style="left:1159px;top:534px;font-size:10.5px;color:#b4b4b4;font-weight:bold;letter-spacing:-1.50px;">トラック</span><div style="left:1140px;top:549px;width:15px;height:15px;background:#5a5a5a;"></div><svg style="left:1140px;top:549px;" width="15" height="15" viewBox="0 0 15 15"><path d="M2.7 7.5l3.6 3.8 6.3-7.5" fill="none" stroke="#fff" stroke-width="1.600"/></svg><span class="t jp" style="left:1159px;top:551px;font-size:10.5px;color:#b4b4b4;font-weight:bold;letter-spacing:-1.34px;">グループ</span><div style="left:1139px;top:576px;width:16px;height:16px;background:#1b1b1b;border:1px solid #555;border-radius:2px;"></div><span class="t jp" style="left:1139px;top:576.500px;width:16px;text-align:center;font-size:15.500px;color:#f7dc28;transform:scaleX(0.86);">M</span><div style="left:1159px;top:576px;width:16px;height:16px;background:#1b1b1b;border:1px solid #555;border-radius:2px;"></div><span class="t jp" style="left:1159px;top:576.500px;width:16px;text-align:center;font-size:15.500px;color:#22e095;transform:scaleX(0.86);">S</span><div style="left:1179px;top:576px;width:16px;height:16px;background:#1b1b1b;border:1px solid #555;border-radius:2px;"></div><span class="t jp" style="left:1179px;top:576.500px;width:16px;text-align:center;font-size:15.500px;color:#f47868;transform:scaleX(0.86);">R</span><span class="t mono" style="left:925px;top:594px;font-size:13.0px;color:#fff;transform:scaleX(0.7680);transform-origin:0 0;">L</span><span class="t mono" style="left:945px;top:594px;font-size:13.0px;color:#fff;transform:scaleX(0.7680);transform-origin:0 0;">R</span><div style="left:921px;top:608px;width:36px;height:204px;background:#333;border:1px solid #5a5a5a;"></div><span class="t jp" style="left:895px;top:608px;font-size:10px;color:#9a9a9a;letter-spacing:-0.200px;">100%</span><span class="t jp" style="left:904px;top:804px;font-size:10px;color:#9a9a9a;letter-spacing:-0.200px;">0%</span><svg style="left:0px;top:0px;" width="1210" height="870" viewBox="0 0 1210 870"><rect x="912" y="629" width="6" height="1" fill="#6a6a6a"/><rect x="923" y="629" width="32" height="1" fill="#3d3d3d"/><rect x="912" y="649" width="6" height="1" fill="#6a6a6a"/><rect x="923" y="649" width="32" height="1" fill="#3d3d3d"/><rect x="912" y="669" width="6" height="1" fill="#6a6a6a"/><rect x="923" y="669" width="32" height="1" fill="#3d3d3d"/><rect x="912" y="689" width="6" height="1" fill="#6a6a6a"/><rect x="923" y="689" width="32" height="1" fill="#3d3d3d"/><rect x="903" y="710" width="15" height="1" fill="#6a6a6a"/><rect x="923" y="710" width="32" height="1" fill="#3d3d3d"/><rect x="912" y="731" width="6" height="1" fill="#6a6a6a"/><rect x="923" y="731" width="32" height="1" fill="#3d3d3d"/><rect x="912" y="751" width="6" height="1" fill="#6a6a6a"/><rect x="923" y="751" width="32" height="1" fill="#3d3d3d"/><rect x="912" y="771" width="6" height="1" fill="#6a6a6a"/><rect x="923" y="771" width="32" height="1" fill="#3d3d3d"/><rect x="912" y="791" width="6" height="1" fill="#6a6a6a"/><rect x="923" y="791" width="32" height="1" fill="#3d3d3d"/></svg><span class="t mono" style="left:915px;top:815px;font-size:10.83px;color:#fff;transform:scaleX(0.7538);transform-origin:0 0;">-inf.</span><span class="t mono" style="left:934px;top:826px;font-size:10.83px;color:#fff;transform:scaleX(0.7538);transform-origin:0 0;">-inf.</span><span class="t mono" style="left:1042px;top:594px;font-size:13.0px;color:#fff;transform:scaleX(0.7680);transform-origin:0 0;">L</span><span class="t mono" style="left:1062px;top:594px;font-size:13.0px;color:#fff;transform:scaleX(0.7680);transform-origin:0 0;">R</span><div style="left:1038px;top:608px;width:36px;height:204px;background:#333;border:1px solid #5a5a5a;"></div><span class="t jp" style="left:1012px;top:608px;font-size:10px;color:#9a9a9a;letter-spacing:-0.200px;">100%</span><span class="t jp" style="left:1021px;top:804px;font-size:10px;color:#9a9a9a;letter-spacing:-0.200px;">0%</span><svg style="left:0px;top:0px;" width="1210" height="870" viewBox="0 0 1210 870"><rect x="1029" y="629" width="6" height="1" fill="#6a6a6a"/><rect x="1040" y="629" width="32" height="1" fill="#3d3d3d"/><rect x="1029" y="649" width="6" height="1" fill="#6a6a6a"/><rect x="1040" y="649" width="32" height="1" fill="#3d3d3d"/><rect x="1029" y="669" width="6" height="1" fill="#6a6a6a"/><rect x="1040" y="669" width="32" height="1" fill="#3d3d3d"/><rect x="1029" y="689" width="6" height="1" fill="#6a6a6a"/><rect x="1040" y="689" width="32" height="1" fill="#3d3d3d"/><rect x="1020" y="710" width="15" height="1" fill="#6a6a6a"/><rect x="1040" y="710" width="32" height="1" fill="#3d3d3d"/><rect x="1029" y="731" width="6" height="1" fill="#6a6a6a"/><rect x="1040" y="731" width="32" height="1" fill="#3d3d3d"/><rect x="1029" y="751" width="6" height="1" fill="#6a6a6a"/><rect x="1040" y="751" width="32" height="1" fill="#3d3d3d"/><rect x="1029" y="771" width="6" height="1" fill="#6a6a6a"/><rect x="1040" y="771" width="32" height="1" fill="#3d3d3d"/><rect x="1029" y="791" width="6" height="1" fill="#6a6a6a"/><rect x="1040" y="791" width="32" height="1" fill="#3d3d3d"/></svg><span class="t mono" style="left:1035px;top:815px;font-size:10.83px;color:#fff;transform:scaleX(0.7538);transform-origin:0 0;">-1.7</span><span class="t mono" style="left:1054px;top:826px;font-size:10.83px;color:#fff;transform:scaleX(0.7538);transform-origin:0 0;">-1.9</span><div style="left:1043px;top:726px;width:5px;height:85px;background:linear-gradient(#8ee83a,#4fdc3c 25%,#48dc48);"></div><div style="left:1063px;top:738px;width:5px;height:73px;background:linear-gradient(#6ee23a,#48dc48);"></div><div style="left:972px;top:617px;width:14px;height:193px;background:#444;border-radius:7px;"></div><div style="left:972px;top:710px;width:14px;height:1px;background:#5a5a5a;"></div><div style="left:972px;top:797px;width:14px;height:14px;background:#6a6a6a;border-radius:7px;"></div><div style="left:974px;top:803px;width:10px;height:1px;background:#ddd;"></div><div style="left:1096px;top:612px;width:14px;height:191px;background:#444;border-radius:7px;"></div><div style="left:1096px;top:710px;width:14px;height:1px;background:#5a5a5a;"></div><div style="left:1095px;top:611px;width:14px;height:14px;background:#fff;border-radius:7px;box-shadow:0 0 1px #000;"></div><div style="left:1097px;top:617.5px;width:10px;height:1.5px;background:#e8324f;"></div><div style="left:1141px;top:614px;width:53px;height:14px;background:#444;border-radius:7px;"></div><div style="left:1161px;top:614px;width:14px;height:14px;background:#fff;border-radius:7px;"></div><div style="left:1167.3px;top:616px;width:1.5px;height:10px;background:#e8324f;"></div><div style="left:1161px;top:640px;width:14px;height:169px;background:#444;border-radius:7px;"></div><div style="left:1161px;top:750px;width:14px;height:1px;background:#5a5a5a;"></div><div style="left:1161px;top:691px;width:14px;height:14px;background:#fff;border-radius:7px;"></div><div style="left:1163px;top:697.3px;width:10px;height:1.5px;background:#e8324f;"></div><div style="left:1078px;top:816px;width:45px;height:15px;background:#fff;"></div><span class="t mono" style="left:1093px;top:818px;font-size:13.0px;color:#000;transform:scaleX(0.7690);transform-origin:0 0;">0.0</span><div style="left:1145px;top:816px;width:45px;height:15px;background:#fff;"></div><span class="t mono" style="left:1160px;top:818px;font-size:13.0px;color:#000;transform:scaleX(0.7690);transform-origin:0 0;">0.0</span><div style="left:898px;top:841px;width:15px;height:15px;background:#5a5a5a;"></div><svg style="left:898px;top:841px;" width="15" height="15" viewBox="0 0 15 15"><path d="M2.7 7.5l3.6 3.8 6.3-7.5" fill="none" stroke="#fff" stroke-width="1.600"/></svg><span class="t jp" style="left:917px;top:843px;font-size:10.5px;color:#8a8a8a;font-weight:bold;letter-spacing:-1.50px;">モニター</span><div style="left:1131px;top:845px;width:71px;height:1px;background:#4a4a4a;"></div><div style="left:1132px;top:845px;width:53px;height:16px;background:#1a1a1a;border:1px solid #4a4a4a;"></div><svg style="left:1132px;top:846px;" width="70" height="15" viewBox="0 0 70 15"><path d="M10 3v9l-5-4.500zM41 3v9l5-4.500z" fill="#e0e0e0"/><rect x="15.500" y="5.500" width="9.500" height="4" fill="#e8e8e8"/><path d="M25 7.500h12" stroke="#ddd" stroke-width="1"/><path d="M57 7.500h9M59.500 5l-2.500 2.500 2.500 2.500M63.500 5l2.500 2.500-2.500 2.500" fill="none" stroke="#ddd" stroke-width="1"/></svg></body></html>
